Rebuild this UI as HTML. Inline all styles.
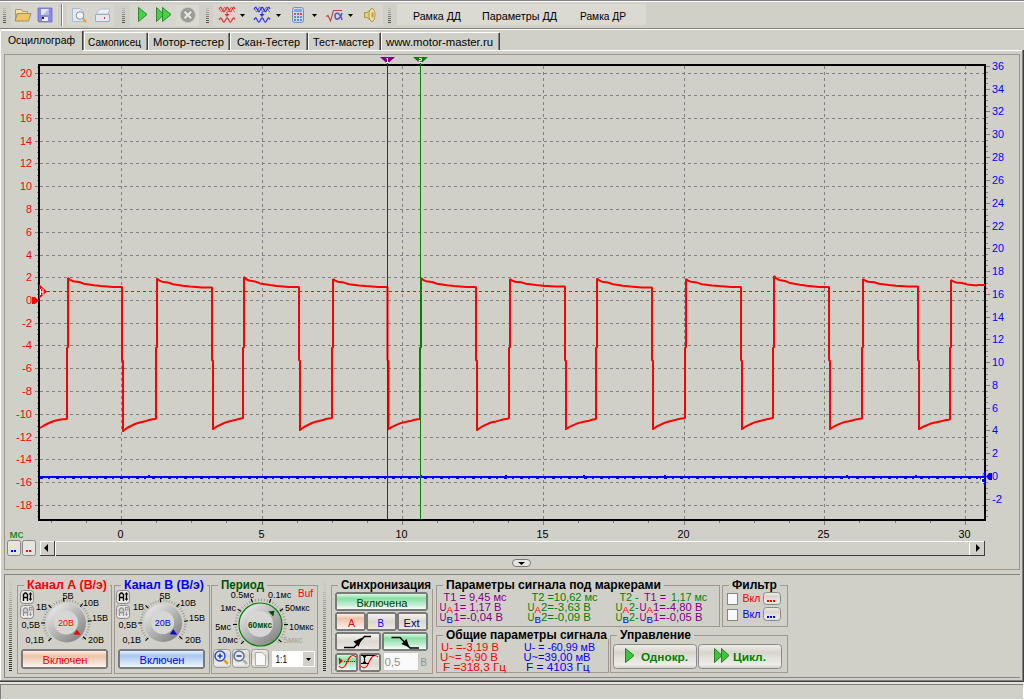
<!DOCTYPE html>
<html><head><meta charset="utf-8"><style>
html,body{margin:0;padding:0;background:#d0d0c8;width:1024px;height:700px;overflow:hidden}
svg{display:block;font-family:"Liberation Sans", sans-serif}
</style></head><body>
<svg width="1024" height="700" viewBox="0 0 1024 700">
<rect width="1024" height="700" fill="#d0d0c8"/>
<rect x="0" y="0" width="1024" height="1" fill="#808080" /><rect x="0" y="1" width="1024" height="1" fill="#ffffff" /><rect x="0" y="28" width="1024" height="1" fill="#808080" /><rect x="0" y="29" width="1024" height="1" fill="#ffffff" /><rect x="11" y="4" width="47" height="22" fill="#d6d6ce" /><rect x="67" y="4" width="47" height="22" fill="#d6d6ce" /><rect x="130" y="4" width="46" height="22" fill="#d6d6ce" /><rect x="176" y="5" width="23" height="21" fill="#dadad3" /><rect x="213" y="4" width="170" height="22" fill="#d6d6ce" /><rect x="397" y="4" width="249" height="21" fill="#dadad3" /><rect x="3" y="8" width="3" height="1" fill="#c0bcb4" /><rect x="3" y="10" width="3" height="1" fill="#b0aca0" /><rect x="3" y="12" width="3" height="1" fill="#a09c94" /><rect x="3" y="14" width="3" height="1" fill="#908c80" /><rect x="3" y="16" width="3" height="1" fill="#807c74" /><rect x="3" y="18" width="3" height="1" fill="#706c64" /><rect x="3" y="20" width="3" height="1" fill="#605c54" /><rect x="3" y="22" width="3" height="1" fill="#505050" /><rect x="122" y="8" width="3" height="1" fill="#c0bcb4" /><rect x="122" y="10" width="3" height="1" fill="#b0aca0" /><rect x="122" y="12" width="3" height="1" fill="#a09c94" /><rect x="122" y="14" width="3" height="1" fill="#908c80" /><rect x="122" y="16" width="3" height="1" fill="#807c74" /><rect x="122" y="18" width="3" height="1" fill="#706c64" /><rect x="122" y="20" width="3" height="1" fill="#605c54" /><rect x="122" y="22" width="3" height="1" fill="#505050" /><rect x="206" y="8" width="3" height="1" fill="#c0bcb4" /><rect x="206" y="10" width="3" height="1" fill="#b0aca0" /><rect x="206" y="12" width="3" height="1" fill="#a09c94" /><rect x="206" y="14" width="3" height="1" fill="#908c80" /><rect x="206" y="16" width="3" height="1" fill="#807c74" /><rect x="206" y="18" width="3" height="1" fill="#706c64" /><rect x="206" y="20" width="3" height="1" fill="#605c54" /><rect x="206" y="22" width="3" height="1" fill="#505050" /><rect x="388" y="8" width="3" height="1" fill="#c0bcb4" /><rect x="388" y="10" width="3" height="1" fill="#b0aca0" /><rect x="388" y="12" width="3" height="1" fill="#a09c94" /><rect x="388" y="14" width="3" height="1" fill="#908c80" /><rect x="388" y="16" width="3" height="1" fill="#807c74" /><rect x="388" y="18" width="3" height="1" fill="#706c64" /><rect x="388" y="20" width="3" height="1" fill="#605c54" /><rect x="388" y="22" width="3" height="1" fill="#505050" /><rect x="61" y="4" width="1" height="22" fill="#808080" /><rect x="62" y="4" width="1" height="22" fill="#ffffff" /><path d="M15.5,9.5 H21.5 L22.5,11.5 H27.5 V13.5 H17 L15.5,20.5 Z" fill="#f4e49a" stroke="#a89c70" stroke-width="1"/><path d="M17.5,13.5 H31 L28.5,21 H15 Z" fill="#eec764" stroke="#9c9068" stroke-width="1"/><path d="M38,8 H52 V22 H39 L38,21 Z" fill="#8a8ae0"/><path d="M38,8 H52 V22 H39 L38,21 Z" fill="none" stroke="#6a6ac8" stroke-width="0.8"/><rect x="41" y="9" width="8" height="6" fill="#e4e4ec" /><path d="M49,9 L49,15 L43,15 Z" fill="#b8b8e8"/><rect x="42" y="17" width="6" height="4" fill="#f0f0f4" /><rect x="42" y="17" width="2" height="2" fill="#202030" /><path d="M72.5,8.5 H80 L83.5,12 V21.5 H72.5 Z" fill="#e4e8ee" stroke="#a8bcd4" stroke-width="1"/><circle cx="80" cy="15.5" r="3.8" fill="#f4f4fa" stroke="#8890a8" stroke-width="1"/><path d="M83,19 L86,22" stroke="#e8a040" stroke-width="2.5"/><path d="M96,14 L100,9 H110 L108,14 Z" fill="#eef0f4" stroke="#a8b4c8" stroke-width="0.8"/><path d="M95.5,14.5 H109.5 V21.5 H95.5 Z" fill="#e4e8f0" stroke="#9cacc4" stroke-width="1"/><rect x="104" y="17" width="1" height="2" fill="#d03030" /><path d="M138.5,7.5 L147,14.5 L138.5,21.5 Z" fill="#48d048" stroke="#2c8a2c" stroke-width="1" stroke-linejoin="round"/><path d="M156.5,7.5 L164,14.5 L156.5,21.5 Z" fill="#48d048" stroke="#2c8a2c" stroke-width="1" stroke-linejoin="round"/><path d="M162.5,7.5 L171,14.5 L162.5,21.5 Z" fill="#48d048" stroke="#2c8a2c" stroke-width="1" stroke-linejoin="round"/><circle cx="187.8" cy="15" r="7.6" fill="#9a9a9a" stroke="#c8c8c8" stroke-width="0.8"/><path d="M184.5,11.7 L191.1,18.3 M191.1,11.7 L184.5,18.3" stroke="#e8e8e0" stroke-width="2"/><path d="M219.0,9.5 L219.5,8.5 L220.0,7.7 L220.5,7.3 L221.0,7.4 L221.5,8.0 L222.0,9.0 L222.5,10.0 L223.0,11.0 L223.5,11.6 L224.0,11.7 L224.5,11.3 L225.0,10.5 L225.5,9.5 L226.0,8.5 L226.5,7.7 L227.0,7.3 L227.5,7.4 L228.0,8.0 L228.5,9.0 L229.0,10.0 L229.5,11.0 L230.0,11.6 L230.5,11.7 L231.0,11.3 L231.5,10.5 L232.0,9.5 L232.5,8.5 L233.0,7.7 L233.5,7.3 L234.0,7.4 L234.5,8.0 L235.0,9.0" stroke="#f03030" stroke-width="1.2" fill="none"/><path d="M220.0,9.5 L220.5,10.5 L221.0,11.3 L221.5,11.7 L222.0,11.6 L222.5,11.0 L223.0,10.0 L223.5,9.0 L224.0,8.0 L224.5,7.4 L225.0,7.3 L225.5,7.7 L226.0,8.5 L226.5,9.5 L227.0,10.5 L227.5,11.3 L228.0,11.7 L228.5,11.6 L229.0,11.0 L229.5,10.0 L230.0,9.0 L230.5,8.0 L231.0,7.4 L231.5,7.3 L232.0,7.7 L232.5,8.5 L233.0,9.5 L233.5,10.5 L234.0,11.3 L234.5,11.7 L235.0,11.6" stroke="#f03030" stroke-width="1" fill="none" opacity="0.8"/><path d="M227,12 V15" stroke="#f03030" stroke-width="1.2"/><path d="M224.5,14 H229.5 L227,17 Z" fill="#f03030"/><path d="M219.0,20.0 L219.5,19.1 L220.0,18.4 L220.5,18.0 L221.0,18.1 L221.5,18.7 L222.0,19.5 L222.5,20.5 L223.0,21.3 L223.5,21.9 L224.0,22.0 L224.5,21.6 L225.0,20.9 L225.5,20.0 L226.0,19.1 L226.5,18.4 L227.0,18.0 L227.5,18.1 L228.0,18.7 L228.5,19.5 L229.0,20.5 L229.5,21.3 L230.0,21.9 L230.5,22.0 L231.0,21.6 L231.5,20.9 L232.0,20.0 L232.5,19.1 L233.0,18.4 L233.5,18.0 L234.0,18.1 L234.5,18.7 L235.0,19.5" stroke="#f03030" stroke-width="1.2" fill="none"/><path d="M254.0,9.5 L254.5,8.5 L255.0,7.7 L255.5,7.3 L256.0,7.4 L256.5,8.0 L257.0,9.0 L257.5,10.0 L258.0,11.0 L258.5,11.6 L259.0,11.7 L259.5,11.3 L260.0,10.5 L260.5,9.5 L261.0,8.5 L261.5,7.7 L262.0,7.3 L262.5,7.4 L263.0,8.0 L263.5,9.0 L264.0,10.0 L264.5,11.0 L265.0,11.6 L265.5,11.7 L266.0,11.3 L266.5,10.5 L267.0,9.5 L267.5,8.5 L268.0,7.7 L268.5,7.3 L269.0,7.4 L269.5,8.0 L270.0,9.0" stroke="#3030f0" stroke-width="1.2" fill="none"/><path d="M255.0,9.5 L255.5,10.5 L256.0,11.3 L256.5,11.7 L257.0,11.6 L257.5,11.0 L258.0,10.0 L258.5,9.0 L259.0,8.0 L259.5,7.4 L260.0,7.3 L260.5,7.7 L261.0,8.5 L261.5,9.5 L262.0,10.5 L262.5,11.3 L263.0,11.7 L263.5,11.6 L264.0,11.0 L264.5,10.0 L265.0,9.0 L265.5,8.0 L266.0,7.4 L266.5,7.3 L267.0,7.7 L267.5,8.5 L268.0,9.5 L268.5,10.5 L269.0,11.3 L269.5,11.7 L270.0,11.6" stroke="#3030f0" stroke-width="1" fill="none" opacity="0.8"/><path d="M262,12 V15" stroke="#3030f0" stroke-width="1.2"/><path d="M259.5,14 H264.5 L262,17 Z" fill="#3030f0"/><path d="M254.0,20.0 L254.5,19.1 L255.0,18.4 L255.5,18.0 L256.0,18.1 L256.5,18.7 L257.0,19.5 L257.5,20.5 L258.0,21.3 L258.5,21.9 L259.0,22.0 L259.5,21.6 L260.0,20.9 L260.5,20.0 L261.0,19.1 L261.5,18.4 L262.0,18.0 L262.5,18.1 L263.0,18.7 L263.5,19.5 L264.0,20.5 L264.5,21.3 L265.0,21.9 L265.5,22.0 L266.0,21.6 L266.5,20.9 L267.0,20.0 L267.5,19.1 L268.0,18.4 L268.5,18.0 L269.0,18.1 L269.5,18.7 L270.0,19.5" stroke="#3030f0" stroke-width="1.2" fill="none"/><path d="M240,14 H245 L242.5,17 Z" fill="#000"/><path d="M276,14 H281 L278.5,17 Z" fill="#000"/><path d="M312,14 H317 L314.5,17 Z" fill="#000"/><path d="M348,14 H353 L350.5,17 Z" fill="#000"/><rect x="292.5" y="7.5" width="11" height="15" rx="2" fill="#c8d8ee" stroke="#7890b8"/><rect x="294" y="9" width="8" height="3" fill="#80a8e0" /><rect x="294" y="13" width="2" height="2" fill="#e05050" /><rect x="294" y="16" width="2" height="2" fill="#6888c8" /><rect x="294" y="19" width="2" height="2" fill="#6888c8" /><rect x="297" y="13" width="2" height="2" fill="#e05050" /><rect x="297" y="16" width="2" height="2" fill="#6888c8" /><rect x="297" y="19" width="2" height="2" fill="#6888c8" /><rect x="300" y="13" width="2" height="2" fill="#e05050" /><rect x="300" y="16" width="2" height="2" fill="#6888c8" /><rect x="300" y="19" width="2" height="2" fill="#6888c8" /><path d="M326,16.5 L328,15.5 L330.5,21 L333.5,10.5 H342" stroke="#b04838" stroke-width="1.1" fill="none"/><path d="M342,13 C340,20 335,21 335,16 C335,11.5 340,12 342,20" stroke="#6050c8" stroke-width="1.5" fill="none"/><path d="M364.5,12.5 H367 L372,8.5 V21.5 L367,17.5 H364.5 Z" fill="#e8cc70" stroke="#a08838" stroke-width="0.8"/><ellipse cx="372" cy="15" rx="3" ry="6.5" fill="#f0e0a0" stroke="#a08838" stroke-width="0.8"/><ellipse cx="372.5" cy="15" rx="1.2" ry="3" fill="#c0a050"/><text x="413" y="20" font-size="11" fill="#000" text-anchor="start" font-weight="normal" textLength="48" lengthAdjust="spacingAndGlyphs" >Рамка ДД</text><text x="482" y="20" font-size="11" fill="#000" text-anchor="start" font-weight="normal" textLength="75" lengthAdjust="spacingAndGlyphs" >Параметры ДД</text><text x="580" y="20" font-size="11" fill="#000" text-anchor="start" font-weight="normal" textLength="46" lengthAdjust="spacingAndGlyphs" >Рамка ДР</text><rect x="0" y="50" width="1022" height="1" fill="#ffffff" /><rect x="0" y="30" width="1" height="650" fill="#ffffff" /><rect x="1022" y="50" width="1" height="631" fill="#808080" /><rect x="1023" y="50" width="1" height="632" fill="#404040" /><rect x="0" y="30" width="83" height="21" fill="#d0d0c8" /><rect x="1" y="30" width="82" height="1" fill="#ffffff" /><rect x="0" y="31" width="1" height="20" fill="#ffffff" /><rect x="83" y="31" width="1" height="19" fill="#808080" /><rect x="82" y="31" width="1" height="19" fill="#404040" /><rect x="84" y="32" width="63" height="1" fill="#ffffff" /><rect x="84" y="32" width="1" height="18" fill="#ffffff" /><rect x="146" y="33" width="1" height="17" fill="#808080" /><rect x="147" y="33" width="1" height="17" fill="#404040" /><rect x="148" y="32" width="81" height="1" fill="#ffffff" /><rect x="148" y="32" width="1" height="18" fill="#ffffff" /><rect x="228" y="33" width="1" height="17" fill="#808080" /><rect x="229" y="33" width="1" height="17" fill="#404040" /><rect x="230" y="32" width="77" height="1" fill="#ffffff" /><rect x="230" y="32" width="1" height="18" fill="#ffffff" /><rect x="306" y="33" width="1" height="17" fill="#808080" /><rect x="307" y="33" width="1" height="17" fill="#404040" /><rect x="308" y="32" width="72" height="1" fill="#ffffff" /><rect x="308" y="32" width="1" height="18" fill="#ffffff" /><rect x="379" y="33" width="1" height="17" fill="#808080" /><rect x="380" y="33" width="1" height="17" fill="#404040" /><rect x="381" y="32" width="118" height="1" fill="#ffffff" /><rect x="381" y="32" width="1" height="18" fill="#ffffff" /><rect x="498" y="33" width="1" height="17" fill="#808080" /><rect x="499" y="33" width="1" height="17" fill="#404040" /><text x="8" y="44" font-size="11" fill="#000" text-anchor="start" font-weight="normal" textLength="67" lengthAdjust="spacingAndGlyphs" >Осциллограф</text><text x="88" y="46" font-size="11" fill="#000" text-anchor="start" font-weight="normal" textLength="53" lengthAdjust="spacingAndGlyphs" >Самописец</text><text x="153" y="46" font-size="11" fill="#000" text-anchor="start" font-weight="normal" textLength="71" lengthAdjust="spacingAndGlyphs" >Мотор-тестер</text><text x="237" y="46" font-size="11" fill="#000" text-anchor="start" font-weight="normal" textLength="63" lengthAdjust="spacingAndGlyphs" >Скан-Тестер</text><text x="313" y="46" font-size="11" fill="#000" text-anchor="start" font-weight="normal" textLength="61" lengthAdjust="spacingAndGlyphs" >Тест-мастер</text><text x="386" y="46" font-size="11" fill="#000" text-anchor="start" font-weight="normal" textLength="107" lengthAdjust="spacingAndGlyphs" >www.motor-master.ru</text><rect x="4" y="54" width="1016" height="1" fill="#9d978f" /><rect x="4" y="54" width="1" height="516" fill="#9d978f" /><rect x="1019" y="54" width="1" height="516" fill="#9d978f" /><rect x="4" y="569" width="1016" height="1" fill="#9d978f" /><line x1="40" y1="73.5" x2="984" y2="73.5" stroke="#808080" stroke-width="1" stroke-dasharray="3 3" stroke-dashoffset="0"/><line x1="40" y1="95.5" x2="984" y2="95.5" stroke="#808080" stroke-width="1" stroke-dasharray="3 3" stroke-dashoffset="0"/><line x1="40" y1="118.5" x2="984" y2="118.5" stroke="#808080" stroke-width="1" stroke-dasharray="3 3" stroke-dashoffset="0"/><line x1="40" y1="141.5" x2="984" y2="141.5" stroke="#808080" stroke-width="1" stroke-dasharray="3 3" stroke-dashoffset="0"/><line x1="40" y1="163.5" x2="984" y2="163.5" stroke="#808080" stroke-width="1" stroke-dasharray="3 3" stroke-dashoffset="0"/><line x1="40" y1="186.5" x2="984" y2="186.5" stroke="#808080" stroke-width="1" stroke-dasharray="3 3" stroke-dashoffset="0"/><line x1="40" y1="209.5" x2="984" y2="209.5" stroke="#808080" stroke-width="1" stroke-dasharray="3 3" stroke-dashoffset="0"/><line x1="40" y1="232.5" x2="984" y2="232.5" stroke="#808080" stroke-width="1" stroke-dasharray="3 3" stroke-dashoffset="0"/><line x1="40" y1="255.5" x2="984" y2="255.5" stroke="#808080" stroke-width="1" stroke-dasharray="3 3" stroke-dashoffset="0"/><line x1="40" y1="277.5" x2="984" y2="277.5" stroke="#808080" stroke-width="1" stroke-dasharray="3 3" stroke-dashoffset="0"/><line x1="40" y1="300.5" x2="984" y2="300.5" stroke="#808080" stroke-width="1" stroke-dasharray="3 3" stroke-dashoffset="0"/><line x1="40" y1="323.5" x2="984" y2="323.5" stroke="#808080" stroke-width="1" stroke-dasharray="3 3" stroke-dashoffset="0"/><line x1="40" y1="345.5" x2="984" y2="345.5" stroke="#808080" stroke-width="1" stroke-dasharray="3 3" stroke-dashoffset="0"/><line x1="40" y1="368.5" x2="984" y2="368.5" stroke="#808080" stroke-width="1" stroke-dasharray="3 3" stroke-dashoffset="0"/><line x1="40" y1="391.5" x2="984" y2="391.5" stroke="#808080" stroke-width="1" stroke-dasharray="3 3" stroke-dashoffset="0"/><line x1="40" y1="414.5" x2="984" y2="414.5" stroke="#808080" stroke-width="1" stroke-dasharray="3 3" stroke-dashoffset="0"/><line x1="40" y1="437.5" x2="984" y2="437.5" stroke="#808080" stroke-width="1" stroke-dasharray="3 3" stroke-dashoffset="0"/><line x1="40" y1="459.5" x2="984" y2="459.5" stroke="#808080" stroke-width="1" stroke-dasharray="3 3" stroke-dashoffset="0"/><line x1="40" y1="482.5" x2="984" y2="482.5" stroke="#808080" stroke-width="1" stroke-dasharray="3 3" stroke-dashoffset="0"/><line x1="40" y1="505.5" x2="984" y2="505.5" stroke="#808080" stroke-width="1" stroke-dasharray="3 3" stroke-dashoffset="0"/><line x1="121.5" y1="66" x2="121.5" y2="519" stroke="#808080" stroke-width="1" stroke-dasharray="3 3"/><line x1="262.5" y1="66" x2="262.5" y2="519" stroke="#808080" stroke-width="1" stroke-dasharray="3 3"/><line x1="402.5" y1="66" x2="402.5" y2="519" stroke="#808080" stroke-width="1" stroke-dasharray="3 3"/><line x1="543.5" y1="66" x2="543.5" y2="519" stroke="#808080" stroke-width="1" stroke-dasharray="3 3"/><line x1="684.5" y1="66" x2="684.5" y2="519" stroke="#808080" stroke-width="1" stroke-dasharray="3 3"/><line x1="824.5" y1="66" x2="824.5" y2="519" stroke="#808080" stroke-width="1" stroke-dasharray="3 3"/><line x1="965.5" y1="66" x2="965.5" y2="519" stroke="#808080" stroke-width="1" stroke-dasharray="3 3"/><rect x="35" y="73" width="3" height="1" fill="#808080" /><rect x="35" y="95" width="3" height="1" fill="#808080" /><rect x="35" y="118" width="3" height="1" fill="#808080" /><rect x="35" y="141" width="3" height="1" fill="#808080" /><rect x="35" y="163" width="3" height="1" fill="#808080" /><rect x="35" y="186" width="3" height="1" fill="#808080" /><rect x="35" y="209" width="3" height="1" fill="#808080" /><rect x="35" y="232" width="3" height="1" fill="#808080" /><rect x="35" y="255" width="3" height="1" fill="#808080" /><rect x="35" y="277" width="3" height="1" fill="#808080" /><rect x="35" y="300" width="3" height="1" fill="#808080" /><rect x="35" y="323" width="3" height="1" fill="#808080" /><rect x="35" y="345" width="3" height="1" fill="#808080" /><rect x="35" y="368" width="3" height="1" fill="#808080" /><rect x="35" y="391" width="3" height="1" fill="#808080" /><rect x="35" y="414" width="3" height="1" fill="#808080" /><rect x="35" y="437" width="3" height="1" fill="#808080" /><rect x="35" y="459" width="3" height="1" fill="#808080" /><rect x="35" y="482" width="3" height="1" fill="#808080" /><rect x="35" y="505" width="3" height="1" fill="#808080" /><rect x="37" y="67" width="1" height="1" fill="#808080" /><rect x="37" y="79" width="1" height="1" fill="#808080" /><rect x="37" y="84" width="1" height="1" fill="#808080" /><rect x="37" y="90" width="1" height="1" fill="#808080" /><rect x="37" y="101" width="1" height="1" fill="#808080" /><rect x="37" y="107" width="1" height="1" fill="#808080" /><rect x="37" y="112" width="1" height="1" fill="#808080" /><rect x="37" y="124" width="1" height="1" fill="#808080" /><rect x="37" y="130" width="1" height="1" fill="#808080" /><rect x="37" y="135" width="1" height="1" fill="#808080" /><rect x="37" y="147" width="1" height="1" fill="#808080" /><rect x="37" y="152" width="1" height="1" fill="#808080" /><rect x="37" y="158" width="1" height="1" fill="#808080" /><rect x="37" y="169" width="1" height="1" fill="#808080" /><rect x="37" y="175" width="1" height="1" fill="#808080" /><rect x="37" y="180" width="1" height="1" fill="#808080" /><rect x="37" y="192" width="1" height="1" fill="#808080" /><rect x="37" y="198" width="1" height="1" fill="#808080" /><rect x="37" y="203" width="1" height="1" fill="#808080" /><rect x="37" y="215" width="1" height="1" fill="#808080" /><rect x="37" y="221" width="1" height="1" fill="#808080" /><rect x="37" y="226" width="1" height="1" fill="#808080" /><rect x="37" y="238" width="1" height="1" fill="#808080" /><rect x="37" y="244" width="1" height="1" fill="#808080" /><rect x="37" y="249" width="1" height="1" fill="#808080" /><rect x="37" y="261" width="1" height="1" fill="#808080" /><rect x="37" y="266" width="1" height="1" fill="#808080" /><rect x="37" y="272" width="1" height="1" fill="#808080" /><rect x="37" y="283" width="1" height="1" fill="#808080" /><rect x="37" y="289" width="1" height="1" fill="#808080" /><rect x="37" y="294" width="1" height="1" fill="#808080" /><rect x="37" y="306" width="1" height="1" fill="#808080" /><rect x="37" y="312" width="1" height="1" fill="#808080" /><rect x="37" y="317" width="1" height="1" fill="#808080" /><rect x="37" y="329" width="1" height="1" fill="#808080" /><rect x="37" y="334" width="1" height="1" fill="#808080" /><rect x="37" y="340" width="1" height="1" fill="#808080" /><rect x="37" y="351" width="1" height="1" fill="#808080" /><rect x="37" y="357" width="1" height="1" fill="#808080" /><rect x="37" y="362" width="1" height="1" fill="#808080" /><rect x="37" y="374" width="1" height="1" fill="#808080" /><rect x="37" y="380" width="1" height="1" fill="#808080" /><rect x="37" y="385" width="1" height="1" fill="#808080" /><rect x="37" y="397" width="1" height="1" fill="#808080" /><rect x="37" y="403" width="1" height="1" fill="#808080" /><rect x="37" y="408" width="1" height="1" fill="#808080" /><rect x="37" y="420" width="1" height="1" fill="#808080" /><rect x="37" y="426" width="1" height="1" fill="#808080" /><rect x="37" y="431" width="1" height="1" fill="#808080" /><rect x="37" y="443" width="1" height="1" fill="#808080" /><rect x="37" y="448" width="1" height="1" fill="#808080" /><rect x="37" y="454" width="1" height="1" fill="#808080" /><rect x="37" y="465" width="1" height="1" fill="#808080" /><rect x="37" y="471" width="1" height="1" fill="#808080" /><rect x="37" y="476" width="1" height="1" fill="#808080" /><rect x="37" y="488" width="1" height="1" fill="#808080" /><rect x="37" y="494" width="1" height="1" fill="#808080" /><rect x="37" y="499" width="1" height="1" fill="#808080" /><rect x="37" y="511" width="1" height="1" fill="#808080" /><rect x="37" y="516" width="1" height="1" fill="#808080" /><rect x="986" y="66" width="4" height="1" fill="#808080" /><rect x="986" y="89" width="4" height="1" fill="#808080" /><rect x="986" y="111" width="4" height="1" fill="#808080" /><rect x="986" y="134" width="4" height="1" fill="#808080" /><rect x="986" y="157" width="4" height="1" fill="#808080" /><rect x="986" y="180" width="4" height="1" fill="#808080" /><rect x="986" y="203" width="4" height="1" fill="#808080" /><rect x="986" y="226" width="4" height="1" fill="#808080" /><rect x="986" y="248" width="4" height="1" fill="#808080" /><rect x="986" y="271" width="4" height="1" fill="#808080" /><rect x="986" y="294" width="4" height="1" fill="#808080" /><rect x="986" y="317" width="4" height="1" fill="#808080" /><rect x="986" y="339" width="4" height="1" fill="#808080" /><rect x="986" y="362" width="4" height="1" fill="#808080" /><rect x="986" y="385" width="4" height="1" fill="#808080" /><rect x="986" y="408" width="4" height="1" fill="#808080" /><rect x="986" y="430" width="4" height="1" fill="#808080" /><rect x="986" y="453" width="4" height="1" fill="#808080" /><rect x="986" y="476" width="4" height="1" fill="#808080" /><rect x="986" y="499" width="4" height="1" fill="#808080" /><rect x="986" y="72" width="2" height="1" fill="#808080" /><rect x="986" y="78" width="2" height="1" fill="#808080" /><rect x="986" y="83" width="2" height="1" fill="#808080" /><rect x="986" y="95" width="2" height="1" fill="#808080" /><rect x="986" y="100" width="2" height="1" fill="#808080" /><rect x="986" y="106" width="2" height="1" fill="#808080" /><rect x="986" y="117" width="2" height="1" fill="#808080" /><rect x="986" y="123" width="2" height="1" fill="#808080" /><rect x="986" y="128" width="2" height="1" fill="#808080" /><rect x="986" y="140" width="2" height="1" fill="#808080" /><rect x="986" y="146" width="2" height="1" fill="#808080" /><rect x="986" y="151" width="2" height="1" fill="#808080" /><rect x="986" y="163" width="2" height="1" fill="#808080" /><rect x="986" y="169" width="2" height="1" fill="#808080" /><rect x="986" y="174" width="2" height="1" fill="#808080" /><rect x="986" y="186" width="2" height="1" fill="#808080" /><rect x="986" y="192" width="2" height="1" fill="#808080" /><rect x="986" y="197" width="2" height="1" fill="#808080" /><rect x="986" y="209" width="2" height="1" fill="#808080" /><rect x="986" y="215" width="2" height="1" fill="#808080" /><rect x="986" y="220" width="2" height="1" fill="#808080" /><rect x="986" y="232" width="2" height="1" fill="#808080" /><rect x="986" y="237" width="2" height="1" fill="#808080" /><rect x="986" y="243" width="2" height="1" fill="#808080" /><rect x="986" y="254" width="2" height="1" fill="#808080" /><rect x="986" y="260" width="2" height="1" fill="#808080" /><rect x="986" y="265" width="2" height="1" fill="#808080" /><rect x="986" y="277" width="2" height="1" fill="#808080" /><rect x="986" y="283" width="2" height="1" fill="#808080" /><rect x="986" y="288" width="2" height="1" fill="#808080" /><rect x="986" y="300" width="2" height="1" fill="#808080" /><rect x="986" y="306" width="2" height="1" fill="#808080" /><rect x="986" y="311" width="2" height="1" fill="#808080" /><rect x="986" y="323" width="2" height="1" fill="#808080" /><rect x="986" y="328" width="2" height="1" fill="#808080" /><rect x="986" y="334" width="2" height="1" fill="#808080" /><rect x="986" y="345" width="2" height="1" fill="#808080" /><rect x="986" y="351" width="2" height="1" fill="#808080" /><rect x="986" y="356" width="2" height="1" fill="#808080" /><rect x="986" y="368" width="2" height="1" fill="#808080" /><rect x="986" y="374" width="2" height="1" fill="#808080" /><rect x="986" y="379" width="2" height="1" fill="#808080" /><rect x="986" y="391" width="2" height="1" fill="#808080" /><rect x="986" y="397" width="2" height="1" fill="#808080" /><rect x="986" y="402" width="2" height="1" fill="#808080" /><rect x="986" y="414" width="2" height="1" fill="#808080" /><rect x="986" y="419" width="2" height="1" fill="#808080" /><rect x="986" y="425" width="2" height="1" fill="#808080" /><rect x="986" y="436" width="2" height="1" fill="#808080" /><rect x="986" y="442" width="2" height="1" fill="#808080" /><rect x="986" y="447" width="2" height="1" fill="#808080" /><rect x="986" y="459" width="2" height="1" fill="#808080" /><rect x="986" y="465" width="2" height="1" fill="#808080" /><rect x="986" y="470" width="2" height="1" fill="#808080" /><rect x="986" y="482" width="2" height="1" fill="#808080" /><rect x="986" y="488" width="2" height="1" fill="#808080" /><rect x="986" y="493" width="2" height="1" fill="#808080" /><rect x="986" y="505" width="2" height="1" fill="#808080" /><rect x="986" y="510" width="2" height="1" fill="#808080" /><rect x="986" y="516" width="2" height="1" fill="#808080" /><rect x="51" y="521" width="1" height="2" fill="#808080" /><rect x="86" y="521" width="1" height="2" fill="#808080" /><rect x="121" y="521" width="1" height="4" fill="#808080" /><rect x="156" y="521" width="1" height="2" fill="#808080" /><rect x="191" y="521" width="1" height="2" fill="#808080" /><rect x="226" y="521" width="1" height="2" fill="#808080" /><rect x="262" y="521" width="1" height="4" fill="#808080" /><rect x="297" y="521" width="1" height="2" fill="#808080" /><rect x="332" y="521" width="1" height="2" fill="#808080" /><rect x="367" y="521" width="1" height="2" fill="#808080" /><rect x="402" y="521" width="1" height="4" fill="#808080" /><rect x="437" y="521" width="1" height="2" fill="#808080" /><rect x="473" y="521" width="1" height="2" fill="#808080" /><rect x="508" y="521" width="1" height="2" fill="#808080" /><rect x="543" y="521" width="1" height="4" fill="#808080" /><rect x="578" y="521" width="1" height="2" fill="#808080" /><rect x="613" y="521" width="1" height="2" fill="#808080" /><rect x="648" y="521" width="1" height="2" fill="#808080" /><rect x="684" y="521" width="1" height="4" fill="#808080" /><rect x="719" y="521" width="1" height="2" fill="#808080" /><rect x="754" y="521" width="1" height="2" fill="#808080" /><rect x="789" y="521" width="1" height="2" fill="#808080" /><rect x="824" y="521" width="1" height="4" fill="#808080" /><rect x="859" y="521" width="1" height="2" fill="#808080" /><rect x="895" y="521" width="1" height="2" fill="#808080" /><rect x="930" y="521" width="1" height="2" fill="#808080" /><rect x="965" y="521" width="1" height="4" fill="#808080" /><rect x="38" y="64" width="948" height="2" fill="#000" /><rect x="38" y="519" width="948" height="2" fill="#000" /><rect x="38" y="64" width="2" height="457" fill="#000" /><rect x="984" y="64" width="2" height="457" fill="#000" /><text x="20" y="77" font-size="11" fill="#ff0000" text-anchor="start" font-weight="normal" textLength="12" lengthAdjust="spacingAndGlyphs" >20</text><text x="20" y="99" font-size="11" fill="#ff0000" text-anchor="start" font-weight="normal" textLength="12" lengthAdjust="spacingAndGlyphs" >18</text><text x="20" y="122" font-size="11" fill="#ff0000" text-anchor="start" font-weight="normal" textLength="12" lengthAdjust="spacingAndGlyphs" >16</text><text x="20" y="145" font-size="11" fill="#ff0000" text-anchor="start" font-weight="normal" textLength="12" lengthAdjust="spacingAndGlyphs" >14</text><text x="20" y="167" font-size="11" fill="#ff0000" text-anchor="start" font-weight="normal" textLength="12" lengthAdjust="spacingAndGlyphs" >12</text><text x="20" y="190" font-size="11" fill="#ff0000" text-anchor="start" font-weight="normal" textLength="12" lengthAdjust="spacingAndGlyphs" >10</text><text x="26" y="213" font-size="11" fill="#ff0000" text-anchor="start" font-weight="normal" textLength="6" lengthAdjust="spacingAndGlyphs" >8</text><text x="26" y="236" font-size="11" fill="#ff0000" text-anchor="start" font-weight="normal" textLength="6" lengthAdjust="spacingAndGlyphs" >6</text><text x="26" y="259" font-size="11" fill="#ff0000" text-anchor="start" font-weight="normal" textLength="6" lengthAdjust="spacingAndGlyphs" >4</text><text x="26" y="281" font-size="11" fill="#ff0000" text-anchor="start" font-weight="normal" textLength="6" lengthAdjust="spacingAndGlyphs" >2</text><text x="26" y="304" font-size="11" fill="#ff0000" text-anchor="start" font-weight="normal" textLength="6" lengthAdjust="spacingAndGlyphs" >0</text><text x="22" y="327" font-size="11" fill="#ff0000" text-anchor="start" font-weight="normal" textLength="10" lengthAdjust="spacingAndGlyphs" >-2</text><text x="22" y="349" font-size="11" fill="#ff0000" text-anchor="start" font-weight="normal" textLength="10" lengthAdjust="spacingAndGlyphs" >-4</text><text x="22" y="372" font-size="11" fill="#ff0000" text-anchor="start" font-weight="normal" textLength="10" lengthAdjust="spacingAndGlyphs" >-6</text><text x="22" y="395" font-size="11" fill="#ff0000" text-anchor="start" font-weight="normal" textLength="10" lengthAdjust="spacingAndGlyphs" >-8</text><text x="16" y="418" font-size="11" fill="#ff0000" text-anchor="start" font-weight="normal" textLength="16" lengthAdjust="spacingAndGlyphs" >-10</text><text x="16" y="441" font-size="11" fill="#ff0000" text-anchor="start" font-weight="normal" textLength="16" lengthAdjust="spacingAndGlyphs" >-12</text><text x="16" y="463" font-size="11" fill="#ff0000" text-anchor="start" font-weight="normal" textLength="16" lengthAdjust="spacingAndGlyphs" >-14</text><text x="16" y="486" font-size="11" fill="#ff0000" text-anchor="start" font-weight="normal" textLength="16" lengthAdjust="spacingAndGlyphs" >-16</text><text x="16" y="509" font-size="11" fill="#ff0000" text-anchor="start" font-weight="normal" textLength="16" lengthAdjust="spacingAndGlyphs" >-18</text><text x="992" y="70" font-size="11" fill="#0000ff" text-anchor="start" font-weight="normal" textLength="12" lengthAdjust="spacingAndGlyphs" >36</text><text x="992" y="93" font-size="11" fill="#0000ff" text-anchor="start" font-weight="normal" textLength="12" lengthAdjust="spacingAndGlyphs" >34</text><text x="992" y="115" font-size="11" fill="#0000ff" text-anchor="start" font-weight="normal" textLength="12" lengthAdjust="spacingAndGlyphs" >32</text><text x="992" y="138" font-size="11" fill="#0000ff" text-anchor="start" font-weight="normal" textLength="12" lengthAdjust="spacingAndGlyphs" >30</text><text x="992" y="161" font-size="11" fill="#0000ff" text-anchor="start" font-weight="normal" textLength="12" lengthAdjust="spacingAndGlyphs" >28</text><text x="992" y="184" font-size="11" fill="#0000ff" text-anchor="start" font-weight="normal" textLength="12" lengthAdjust="spacingAndGlyphs" >26</text><text x="992" y="207" font-size="11" fill="#0000ff" text-anchor="start" font-weight="normal" textLength="12" lengthAdjust="spacingAndGlyphs" >24</text><text x="992" y="230" font-size="11" fill="#0000ff" text-anchor="start" font-weight="normal" textLength="12" lengthAdjust="spacingAndGlyphs" >22</text><text x="992" y="252" font-size="11" fill="#0000ff" text-anchor="start" font-weight="normal" textLength="12" lengthAdjust="spacingAndGlyphs" >20</text><text x="992" y="275" font-size="11" fill="#0000ff" text-anchor="start" font-weight="normal" textLength="12" lengthAdjust="spacingAndGlyphs" >18</text><text x="992" y="298" font-size="11" fill="#0000ff" text-anchor="start" font-weight="normal" textLength="12" lengthAdjust="spacingAndGlyphs" >16</text><text x="992" y="321" font-size="11" fill="#0000ff" text-anchor="start" font-weight="normal" textLength="12" lengthAdjust="spacingAndGlyphs" >14</text><text x="992" y="343" font-size="11" fill="#0000ff" text-anchor="start" font-weight="normal" textLength="12" lengthAdjust="spacingAndGlyphs" >12</text><text x="992" y="366" font-size="11" fill="#0000ff" text-anchor="start" font-weight="normal" textLength="12" lengthAdjust="spacingAndGlyphs" >10</text><text x="992" y="389" font-size="11" fill="#0000ff" text-anchor="start" font-weight="normal" textLength="6" lengthAdjust="spacingAndGlyphs" >8</text><text x="992" y="412" font-size="11" fill="#0000ff" text-anchor="start" font-weight="normal" textLength="6" lengthAdjust="spacingAndGlyphs" >6</text><text x="992" y="434" font-size="11" fill="#0000ff" text-anchor="start" font-weight="normal" textLength="6" lengthAdjust="spacingAndGlyphs" >4</text><text x="992" y="457" font-size="11" fill="#0000ff" text-anchor="start" font-weight="normal" textLength="6" lengthAdjust="spacingAndGlyphs" >2</text><text x="992" y="480" font-size="11" fill="#0000ff" text-anchor="start" font-weight="normal" textLength="6" lengthAdjust="spacingAndGlyphs" >0</text><text x="992" y="503" font-size="11" fill="#0000ff" text-anchor="start" font-weight="normal" textLength="10" lengthAdjust="spacingAndGlyphs" >-2</text><text x="117.5" y="538" font-size="11" fill="#000" text-anchor="start" font-weight="normal" textLength="6" lengthAdjust="spacingAndGlyphs" >0</text><text x="258.5" y="538" font-size="11" fill="#000" text-anchor="start" font-weight="normal" textLength="6" lengthAdjust="spacingAndGlyphs" >5</text><text x="395.5" y="538" font-size="11" fill="#000" text-anchor="start" font-weight="normal" textLength="12" lengthAdjust="spacingAndGlyphs" >10</text><text x="536.5" y="538" font-size="11" fill="#000" text-anchor="start" font-weight="normal" textLength="12" lengthAdjust="spacingAndGlyphs" >15</text><text x="677.5" y="538" font-size="11" fill="#000" text-anchor="start" font-weight="normal" textLength="12" lengthAdjust="spacingAndGlyphs" >20</text><text x="817.5" y="538" font-size="11" fill="#000" text-anchor="start" font-weight="normal" textLength="12" lengthAdjust="spacingAndGlyphs" >25</text><text x="958.5" y="538" font-size="11" fill="#000" text-anchor="start" font-weight="normal" textLength="12" lengthAdjust="spacingAndGlyphs" >30</text><text x="9.5" y="538" font-size="11" fill="#008000" text-anchor="start" font-weight="normal" textLength="14" lengthAdjust="spacingAndGlyphs" >мс</text><line x1="47" y1="291.5" x2="984" y2="291.5" stroke="#ff0000" stroke-width="1" stroke-dasharray="3 3"/><path d="M39,284 L47,291.5 L39,299 Z" fill="#ff0000"/><path d="M40.5,295 V289.5 L41.5,288.5 H42 L43,289.5 V295 M40.5,292 H43" stroke="#ffffff" stroke-width="1" fill="none"/><path d="M32,297 H35 L39,300.5 L35,304 H32 Z" fill="#ff0000"/><path d="M40.0,428.0 L44.0,425.5 L49.0,423.0 L54.0,421.0 L58.0,420.0 L63.0,419.3 L67.0,419.0 L67.0,348.0 L68.0,347.0 L68.0,278.0 L70.0,279.8 L73.0,281.2 L79.0,282.0 L84.0,283.8 L94.0,285.2 L101.0,286.0 L113.0,287.0 L122.0,287.0 L122.0,360.0 L123.0,361.0 L123.0,432.0 L123.0,431.0 L127.0,428.0 L131.0,426.0 L135.0,424.0 L138.0,423.0 L142.0,422.0 L146.0,421.0 L149.0,420.0 L154.0,419.0 L156.0,419.0 L156.0,348.0 L157.0,347.0 L157.0,278.5 L159.0,280.3 L162.0,281.7 L168.0,282.5 L173.0,284.3 L183.0,285.7 L190.0,286.5 L202.0,287.5 L212.0,287.5 L212.0,360.0 L213.0,361.0 L213.0,430.0 L213.0,429.1 L217.0,426.3 L221.0,424.5 L225.0,422.6 L228.0,421.7 L232.0,420.8 L236.0,419.8 L239.0,418.9 L243.0,418.0 L243.0,348.0 L244.0,347.0 L244.0,277.0 L246.0,279.0 L249.0,280.6 L255.0,281.4 L260.0,283.4 L270.0,285.0 L277.0,285.9 L289.0,287.0 L299.0,287.0 L299.0,360.0 L300.0,361.0 L300.0,431.0 L300.0,430.0 L304.0,427.0 L308.0,425.0 L312.0,423.0 L315.0,422.0 L319.0,421.0 L323.0,420.0 L326.0,419.0 L332.0,418.0 L332.0,348.0 L333.0,347.0 L333.0,279.0 L335.0,280.6 L338.0,281.8 L344.0,282.6 L349.0,284.2 L359.0,285.4 L366.0,286.1 L378.0,287.0 L387.5,287.0 L387.5,360.0 L388.5,361.0 L388.5,430.0 L388.5,429.2 L392.5,426.6 L396.5,424.9 L400.5,423.2 L403.5,422.4 L407.5,421.5 L411.5,420.7 L414.5,419.8 L420.0,419.0 L420.0,348.0 L421.0,347.0 L421.0,278.0 L423.0,279.8 L426.0,281.2 L432.0,282.0 L437.0,283.8 L447.0,285.2 L454.0,286.0 L466.0,287.0 L476.0,287.0 L476.0,360.0 L477.0,361.0 L477.0,431.0 L477.0,430.0 L481.0,427.2 L485.0,425.2 L489.0,423.3 L492.0,422.3 L496.0,421.4 L500.0,420.4 L503.0,419.5 L509.0,418.5 L509.0,348.0 L510.0,347.0 L510.0,279.0 L512.0,280.5 L515.0,281.7 L521.0,282.3 L526.0,283.8 L536.0,285.0 L543.0,285.7 L555.0,286.5 L565.0,286.5 L565.0,360.0 L566.0,361.0 L566.0,430.0 L566.0,429.2 L570.0,426.6 L574.0,424.9 L578.0,423.2 L581.0,422.4 L585.0,421.5 L589.0,420.7 L592.0,419.8 L596.0,419.0 L596.0,348.0 L597.0,347.0 L597.0,278.5 L599.0,280.3 L602.0,281.7 L608.0,282.5 L613.0,284.3 L623.0,285.7 L630.0,286.5 L642.0,287.5 L652.0,287.5 L652.0,360.0 L653.0,361.0 L653.0,430.0 L653.0,429.1 L657.0,426.3 L661.0,424.5 L665.0,422.6 L668.0,421.7 L672.0,420.8 L676.0,419.8 L679.0,418.9 L685.0,418.0 L685.0,348.0 L686.0,347.0 L686.0,279.0 L688.0,280.6 L691.0,281.8 L697.0,282.6 L702.0,284.2 L712.0,285.4 L719.0,286.1 L731.0,287.0 L741.0,287.0 L741.0,360.0 L742.0,361.0 L742.0,430.0 L742.0,429.1 L746.0,426.3 L750.0,424.5 L754.0,422.6 L757.0,421.7 L761.0,420.8 L765.0,419.8 L768.0,418.9 L773.0,418.0 L773.0,348.0 L774.0,347.0 L774.0,276.0 L776.0,278.2 L779.0,279.9 L785.0,280.9 L790.0,283.1 L800.0,284.8 L807.0,285.8 L819.0,287.0 L829.0,287.0 L829.0,360.0 L830.0,361.0 L830.0,430.0 L830.0,429.1 L834.0,426.5 L838.0,424.7 L842.0,422.9 L845.0,422.0 L849.0,421.2 L853.0,420.3 L856.0,419.4 L862.0,418.5 L862.0,348.0 L863.0,347.0 L863.0,279.0 L865.0,280.5 L868.0,281.7 L874.0,282.3 L879.0,283.8 L889.0,285.0 L896.0,285.7 L908.0,286.5 L918.0,286.5 L918.0,360.0 L919.0,361.0 L919.0,430.0 L919.0,429.2 L923.0,426.8 L927.0,425.2 L931.0,423.5 L934.0,422.7 L938.0,421.9 L942.0,421.1 L945.0,420.3 L950.0,419.5 L950.0,348.0 L951.0,347.0 L951.0,280.0 L953.0,281.4 L956.0,282.4 L962.0,283.0 L967.0,284.4 L977.0,285.4 L978.0,285.0 L985.0,285.0" fill="none" stroke="#ff0000" stroke-width="2" stroke-linejoin="bevel"/><rect x="40" y="476" width="945" height="2" fill="#0000ff" /><line x1="40" y1="478.5" x2="980" y2="478.5" stroke="#0000ff" stroke-width="1" stroke-dasharray="3 5 2 6"/><rect x="148" y="475" width="2" height="1" fill="#0000ff" /><rect x="420" y="475" width="2" height="1" fill="#0000ff" /><rect x="505" y="475" width="2" height="1" fill="#0000ff" /><rect x="583" y="475" width="2" height="1" fill="#0000ff" /><rect x="664" y="475" width="2" height="1" fill="#0000ff" /><rect x="846" y="475" width="2" height="1" fill="#0000ff" /><rect x="915" y="475" width="2" height="1" fill="#0000ff" /><path d="M985,471 L980,478.5 L985,486 Z" fill="#0000ff"/><rect x="981" y="478" width="3" height="1" fill="#ffffff" /><rect x="981" y="479" width="1" height="3" fill="#ffffff" /><rect x="981" y="482" width="3" height="1" fill="#ffffff" /><rect x="981" y="474.5" width="3" height="1" fill="#ffffff" /><path d="M986,476.5 L989,473 H992 V480 H989 Z" fill="#0000ff"/><rect x="387" y="57" width="1" height="462" fill="#800080" /><path d="M380,57 L395,57 L387.5,64 Z" fill="#800080"/><path d="M386.5,59 L387.5,58 V62.5 M386,62.5 H389" stroke="#ffffff" stroke-width="1" fill="none"/><rect x="420" y="57" width="1" height="462" fill="#008000" /><path d="M413,57 L428,57 L420.5,64 Z" fill="#008000"/><path d="M419,58.5 H421.5 V60.5 H419 V62.5 H422" stroke="#ffffff" stroke-width="1" fill="none"/><rect x="40" y="541" width="929" height="15" fill="#d0d0c8" /><rect x="55" y="541" width="914" height="1" fill="#ffffff" /><rect x="55" y="555" width="914" height="1" fill="#404040" /><rect x="40" y="541" width="15" height="15" fill="#d0d0c8" /><rect x="40" y="541" width="15" height="1" fill="#fff" /><rect x="40" y="541" width="1" height="15" fill="#fff" /><rect x="40" y="555" width="15" height="1" fill="#404040" /><rect x="54" y="541" width="1" height="15" fill="#404040" /><path d="M44,548 L48,544 L48,552 Z" fill="#000"/><rect x="969" y="541" width="16" height="15" fill="#d0d0c8" /><rect x="969" y="541" width="16" height="1" fill="#fff" /><rect x="969" y="541" width="1" height="15" fill="#fff" /><rect x="969" y="555" width="16" height="1" fill="#404040" /><rect x="984" y="541" width="1" height="15" fill="#404040" /><path d="M980,548 L976,544 L976,552 Z" fill="#000"/><rect x="55" y="541" width="1" height="15" fill="#fff" /><rect x="7.5" y="540.5" width="13" height="15" rx="2" fill="#e6e4de" stroke="#888"/><rect x="22.5" y="540.5" width="13" height="15" rx="2" fill="#e6e4de" stroke="#888"/><rect x="11" y="550" width="2" height="2" fill="#0000ff" /><rect x="14" y="550" width="2" height="2" fill="#0000ff" /><rect x="26" y="550" width="2" height="2" fill="#ff0000" /><rect x="29" y="550" width="2" height="2" fill="#ff0000" /><rect x="512.5" y="559.5" width="18" height="7" rx="3.5" fill="#e8e6e0" stroke="#777"/><path d="M518,562 L525,562 L521.5,565 Z" fill="#000"/><rect x="4" y="574" width="1016" height="1" fill="#858585" /><rect x="4" y="574" width="1" height="104" fill="#858585" /><rect x="4" y="677" width="1016" height="1" fill="#858585" /><rect x="0" y="680" width="1023" height="1" fill="#808080" /><rect x="0" y="681" width="1024" height="1" fill="#404040" /><rect x="0" y="682" width="1024" height="2" fill="#e4e4dc" /><rect x="0" y="684" width="1023" height="1" fill="#808080" /><rect x="0" y="684" width="1" height="15" fill="#808080" /><rect x="1023" y="682" width="1" height="18" fill="#ffffff" /><rect x="0" y="699" width="1024" height="1" fill="#ffffff" /><rect x="9" y="582" width="3" height="1" fill="#c8c4bc" /><rect x="9" y="584" width="3" height="1" fill="#c8c4bc" /><rect x="9" y="586" width="3" height="1" fill="#c8c4bc" /><rect x="9" y="588" width="3" height="1" fill="#c8c4bc" /><rect x="9" y="590" width="3" height="1" fill="#c8c4bc" /><rect x="9" y="592" width="3" height="1" fill="#b8b4ac" /><rect x="9" y="594" width="3" height="1" fill="#b8b4ac" /><rect x="9" y="596" width="3" height="1" fill="#b8b4ac" /><rect x="9" y="598" width="3" height="1" fill="#b8b4ac" /><rect x="9" y="600" width="3" height="1" fill="#a8a098" /><rect x="9" y="602" width="3" height="1" fill="#a8a098" /><rect x="9" y="604" width="3" height="1" fill="#a8a098" /><rect x="9" y="606" width="3" height="1" fill="#a8a098" /><rect x="9" y="608" width="3" height="1" fill="#989088" /><rect x="9" y="610" width="3" height="1" fill="#989088" /><rect x="9" y="612" width="3" height="1" fill="#989088" /><rect x="9" y="614" width="3" height="1" fill="#989088" /><rect x="9" y="616" width="3" height="1" fill="#888878" /><rect x="9" y="618" width="3" height="1" fill="#888878" /><rect x="9" y="620" width="3" height="1" fill="#888878" /><rect x="9" y="622" width="3" height="1" fill="#888878" /><rect x="9" y="624" width="3" height="1" fill="#787868" /><rect x="9" y="626" width="3" height="1" fill="#787868" /><rect x="9" y="628" width="3" height="1" fill="#787868" /><rect x="9" y="630" width="3" height="1" fill="#787868" /><rect x="9" y="632" width="3" height="1" fill="#686860" /><rect x="9" y="634" width="3" height="1" fill="#686860" /><rect x="9" y="636" width="3" height="1" fill="#686860" /><rect x="9" y="638" width="3" height="1" fill="#686860" /><rect x="9" y="640" width="3" height="1" fill="#585850" /><rect x="9" y="642" width="3" height="1" fill="#585850" /><rect x="9" y="644" width="3" height="1" fill="#585850" /><rect x="9" y="646" width="3" height="1" fill="#585850" /><rect x="9" y="648" width="3" height="1" fill="#484840" /><rect x="9" y="650" width="3" height="1" fill="#484840" /><rect x="9" y="652" width="3" height="1" fill="#484840" /><rect x="9" y="654" width="3" height="1" fill="#484840" /><rect x="9" y="656" width="3" height="1" fill="#383830" /><rect x="9" y="658" width="3" height="1" fill="#383830" /><rect x="9" y="660" width="3" height="1" fill="#383830" /><rect x="9" y="662" width="3" height="1" fill="#383830" /><rect x="9" y="664" width="3" height="1" fill="#303030" /><rect x="9" y="666" width="3" height="1" fill="#303030" /><rect x="9" y="668" width="3" height="1" fill="#303030" /><rect x="9" y="670" width="3" height="1" fill="#303030" /><rect x="323" y="582" width="3" height="1" fill="#c8c4bc" /><rect x="323" y="584" width="3" height="1" fill="#c8c4bc" /><rect x="323" y="586" width="3" height="1" fill="#c8c4bc" /><rect x="323" y="588" width="3" height="1" fill="#c8c4bc" /><rect x="323" y="590" width="3" height="1" fill="#c8c4bc" /><rect x="323" y="592" width="3" height="1" fill="#b8b4ac" /><rect x="323" y="594" width="3" height="1" fill="#b8b4ac" /><rect x="323" y="596" width="3" height="1" fill="#b8b4ac" /><rect x="323" y="598" width="3" height="1" fill="#b8b4ac" /><rect x="323" y="600" width="3" height="1" fill="#a8a098" /><rect x="323" y="602" width="3" height="1" fill="#a8a098" /><rect x="323" y="604" width="3" height="1" fill="#a8a098" /><rect x="323" y="606" width="3" height="1" fill="#a8a098" /><rect x="323" y="608" width="3" height="1" fill="#989088" /><rect x="323" y="610" width="3" height="1" fill="#989088" /><rect x="323" y="612" width="3" height="1" fill="#989088" /><rect x="323" y="614" width="3" height="1" fill="#989088" /><rect x="323" y="616" width="3" height="1" fill="#888878" /><rect x="323" y="618" width="3" height="1" fill="#888878" /><rect x="323" y="620" width="3" height="1" fill="#888878" /><rect x="323" y="622" width="3" height="1" fill="#888878" /><rect x="323" y="624" width="3" height="1" fill="#787868" /><rect x="323" y="626" width="3" height="1" fill="#787868" /><rect x="323" y="628" width="3" height="1" fill="#787868" /><rect x="323" y="630" width="3" height="1" fill="#787868" /><rect x="323" y="632" width="3" height="1" fill="#686860" /><rect x="323" y="634" width="3" height="1" fill="#686860" /><rect x="323" y="636" width="3" height="1" fill="#686860" /><rect x="323" y="638" width="3" height="1" fill="#686860" /><rect x="323" y="640" width="3" height="1" fill="#585850" /><rect x="323" y="642" width="3" height="1" fill="#585850" /><rect x="323" y="644" width="3" height="1" fill="#585850" /><rect x="323" y="646" width="3" height="1" fill="#585850" /><rect x="323" y="648" width="3" height="1" fill="#484840" /><rect x="323" y="650" width="3" height="1" fill="#484840" /><rect x="323" y="652" width="3" height="1" fill="#484840" /><rect x="323" y="654" width="3" height="1" fill="#484840" /><rect x="323" y="656" width="3" height="1" fill="#383830" /><rect x="323" y="658" width="3" height="1" fill="#383830" /><rect x="323" y="660" width="3" height="1" fill="#383830" /><rect x="323" y="662" width="3" height="1" fill="#383830" /><rect x="323" y="664" width="3" height="1" fill="#303030" /><rect x="323" y="666" width="3" height="1" fill="#303030" /><rect x="323" y="668" width="3" height="1" fill="#303030" /><rect x="323" y="670" width="3" height="1" fill="#303030" /><rect x="17" y="585" width="95" height="1" fill="#a0988f" /><rect x="17" y="585" width="1" height="89" fill="#a0988f" /><rect x="111" y="585" width="1" height="89" fill="#a0988f" /><rect x="17" y="673" width="95" height="1" fill="#a0988f" /><rect x="24" y="579" width="86" height="10" fill="#d0d0c8" /><text x="27" y="589" font-size="12" fill="#ff0000" text-anchor="start" font-weight="bold" textLength="80" lengthAdjust="spacingAndGlyphs" >Канал А (В/э)</text><rect x="114" y="585" width="96" height="1" fill="#a0988f" /><rect x="114" y="585" width="1" height="89" fill="#a0988f" /><rect x="209" y="585" width="1" height="89" fill="#a0988f" /><rect x="114" y="673" width="96" height="1" fill="#a0988f" /><rect x="121" y="579" width="86" height="10" fill="#d0d0c8" /><text x="124" y="589" font-size="12" fill="#0000ff" text-anchor="start" font-weight="bold" textLength="80" lengthAdjust="spacingAndGlyphs" >Канал В (В/э)</text><rect x="211" y="585" width="107" height="1" fill="#a0988f" /><rect x="211" y="585" width="1" height="89" fill="#a0988f" /><rect x="317" y="585" width="1" height="89" fill="#a0988f" /><rect x="211" y="673" width="107" height="1" fill="#a0988f" /><rect x="218" y="579" width="49" height="10" fill="#d0d0c8" /><text x="221" y="589" font-size="12" fill="#005000" text-anchor="start" font-weight="bold" textLength="43" lengthAdjust="spacingAndGlyphs" >Период</text><rect x="331" y="585" width="102" height="1" fill="#a0988f" /><rect x="331" y="585" width="1" height="89" fill="#a0988f" /><rect x="432" y="585" width="1" height="89" fill="#a0988f" /><rect x="331" y="673" width="102" height="1" fill="#a0988f" /><rect x="338" y="579" width="96" height="10" fill="#d0d0c8" /><text x="341" y="589" font-size="12" fill="#000" text-anchor="start" font-weight="bold" textLength="90" lengthAdjust="spacingAndGlyphs" >Синхронизация</text><rect x="436" y="585" width="284" height="1" fill="#a0988f" /><rect x="436" y="585" width="1" height="42" fill="#a0988f" /><rect x="719" y="585" width="1" height="42" fill="#a0988f" /><rect x="436" y="626" width="284" height="1" fill="#a0988f" /><rect x="443" y="579" width="221" height="10" fill="#d0d0c8" /><text x="446" y="589" font-size="12" fill="#000" text-anchor="start" font-weight="bold" textLength="215" lengthAdjust="spacingAndGlyphs" >Параметры сигнала под маркерами</text><rect x="436" y="635" width="173" height="1" fill="#a0988f" /><rect x="436" y="635" width="1" height="38" fill="#a0988f" /><rect x="608" y="635" width="1" height="38" fill="#a0988f" /><rect x="436" y="672" width="173" height="1" fill="#a0988f" /><rect x="443" y="629" width="167" height="10" fill="#d0d0c8" /><text x="446" y="639" font-size="12" fill="#000" text-anchor="start" font-weight="bold" textLength="161" lengthAdjust="spacingAndGlyphs" >Общие параметры сигнала</text><rect x="722" y="585" width="66" height="1" fill="#a0988f" /><rect x="722" y="585" width="1" height="42" fill="#a0988f" /><rect x="787" y="585" width="1" height="42" fill="#a0988f" /><rect x="722" y="626" width="66" height="1" fill="#a0988f" /><rect x="729" y="579" width="51" height="10" fill="#d0d0c8" /><text x="732" y="589" font-size="12" fill="#000" text-anchor="start" font-weight="bold" textLength="45" lengthAdjust="spacingAndGlyphs" >Фильтр</text><rect x="610" y="635" width="178" height="1" fill="#a0988f" /><rect x="610" y="635" width="1" height="38" fill="#a0988f" /><rect x="787" y="635" width="1" height="38" fill="#a0988f" /><rect x="610" y="672" width="178" height="1" fill="#a0988f" /><rect x="617" y="629" width="77" height="10" fill="#d0d0c8" /><text x="620" y="639" font-size="12" fill="#000" text-anchor="start" font-weight="bold" textLength="71" lengthAdjust="spacingAndGlyphs" >Управление</text><defs>
<linearGradient id="knobg" x1="0.15" y1="0.1" x2="0.85" y2="0.9"><stop offset="0" stop-color="#e6e6e6"/><stop offset="0.5" stop-color="#b4b4b4"/><stop offset="1" stop-color="#868686"/></linearGradient>
<linearGradient id="peach" x1="0" y1="0" x2="0" y2="1"><stop offset="0" stop-color="#fbeee8"/><stop offset="0.3" stop-color="#f0c4a4"/><stop offset="0.6" stop-color="#f2d8c8"/><stop offset="1" stop-color="#fff4f0"/></linearGradient>
<linearGradient id="blueb" x1="0" y1="0" x2="0" y2="1"><stop offset="0" stop-color="#e8f0fa"/><stop offset="0.3" stop-color="#a8c8f0"/><stop offset="0.6" stop-color="#c8dcf4"/><stop offset="1" stop-color="#f0f6ff"/></linearGradient>
<linearGradient id="greenb" x1="0" y1="0" x2="0" y2="1"><stop offset="0" stop-color="#d8f8e0"/><stop offset="0.3" stop-color="#88e0a4"/><stop offset="0.7" stop-color="#c0ecd0"/><stop offset="1" stop-color="#f4fff8"/></linearGradient>
<linearGradient id="grayb" x1="0" y1="0" x2="0" y2="1"><stop offset="0" stop-color="#f4f2ee"/><stop offset="0.5" stop-color="#dcd8d0"/><stop offset="1" stop-color="#ece8e2"/></linearGradient>
<linearGradient id="btnb" x1="0" y1="0" x2="0" y2="1"><stop offset="0" stop-color="#eeede8"/><stop offset="0.35" stop-color="#d8d4cc"/><stop offset="0.55" stop-color="#e4e0da"/><stop offset="0.85" stop-color="#eeece8"/><stop offset="1" stop-color="#cfcbc4"/></linearGradient>
</defs><rect x="20.5" y="590.5" width="13" height="13" rx="3" fill="url(#btnb)" stroke="#8a8a8a"/><path d="M23.5,601 V594.5 L25,593 H26 L27.5,594.5 V601 M23.5,597.5 H27.5" stroke="#000" stroke-width="1.3" fill="none"/><path d="M30.5,593 V600" stroke="#000" stroke-width="1.2"/><path d="M28.8,594.5 L30.5,592 L32.2,594.5 Z M28.8,598.5 L30.5,601 L32.2,598.5 Z" fill="#000"/><rect x="20.5" y="605.5" width="13" height="13" rx="3" fill="url(#btnb)" stroke="#8a8a8a"/><path d="M23.5,616 V609.5 L25,608 H26 L27.5,609.5 V616 M23.5,612.5 H27.5" stroke="#9090a0" stroke-width="1.3" fill="none"/><path d="M30.5,612 V616" stroke="#9090a0" stroke-width="1"/><rect x="29.5" y="607.5" width="2.5" height="2.5" fill="none" stroke="#9090a0" stroke-width="0.9"/><path d="M29,614 L30.5,616 L32,614 Z" fill="#9090a0"/><rect x="116.5" y="590.5" width="13" height="13" rx="3" fill="url(#btnb)" stroke="#8a8a8a"/><path d="M119.5,601 V594.5 L121,593 H122 L123.5,594.5 V601 M119.5,597.5 H123.5" stroke="#000" stroke-width="1.3" fill="none"/><path d="M126.5,593 V600" stroke="#000" stroke-width="1.2"/><path d="M124.8,594.5 L126.5,592 L128.2,594.5 Z M124.8,598.5 L126.5,601 L128.2,598.5 Z" fill="#000"/><rect x="116.5" y="605.5" width="13" height="13" rx="3" fill="url(#btnb)" stroke="#8a8a8a"/><path d="M119.5,616 V609.5 L121,608 H122 L123.5,609.5 V616 M119.5,612.5 H123.5" stroke="#9090a0" stroke-width="1.3" fill="none"/><path d="M126.5,612 V616" stroke="#9090a0" stroke-width="1"/><rect x="125.5" y="607.5" width="2.5" height="2.5" fill="none" stroke="#9090a0" stroke-width="0.9"/><path d="M125,614 L126.5,616 L128,614 Z" fill="#9090a0"/><line x1="81.6" y1="638.1" x2="83.4" y2="639.9" stroke="#9a9890" stroke-width="1"/><line x1="83.4" y1="636.2" x2="85.3" y2="637.7" stroke="#9a9890" stroke-width="1"/><line x1="84.8" y1="634.0" x2="87.0" y2="635.3" stroke="#9a9890" stroke-width="1"/><line x1="86.0" y1="631.7" x2="88.3" y2="632.7" stroke="#9a9890" stroke-width="1"/><line x1="87.0" y1="629.3" x2="89.4" y2="630.0" stroke="#9a9890" stroke-width="1"/><line x1="87.6" y1="626.7" x2="90.0" y2="627.2" stroke="#9a9890" stroke-width="1"/><line x1="87.9" y1="624.1" x2="90.4" y2="624.3" stroke="#9a9890" stroke-width="1"/><line x1="87.8" y1="621.5" x2="90.3" y2="621.3" stroke="#9a9890" stroke-width="1"/><line x1="87.5" y1="618.9" x2="90.0" y2="618.4" stroke="#9a9890" stroke-width="1"/><line x1="86.9" y1="616.4" x2="89.2" y2="615.6" stroke="#9a9890" stroke-width="1"/><line x1="85.9" y1="614.0" x2="88.2" y2="612.9" stroke="#9a9890" stroke-width="1"/><line x1="84.6" y1="611.7" x2="86.8" y2="610.3" stroke="#9a9890" stroke-width="1"/><line x1="83.1" y1="609.5" x2="85.1" y2="608.0" stroke="#9a9890" stroke-width="1"/><line x1="81.4" y1="607.6" x2="83.1" y2="605.8" stroke="#9a9890" stroke-width="1"/><line x1="79.4" y1="605.9" x2="80.9" y2="603.9" stroke="#9a9890" stroke-width="1"/><line x1="77.2" y1="604.5" x2="78.5" y2="602.3" stroke="#9a9890" stroke-width="1"/><line x1="74.9" y1="603.3" x2="75.8" y2="601.0" stroke="#9a9890" stroke-width="1"/><line x1="72.4" y1="602.4" x2="73.1" y2="600.0" stroke="#9a9890" stroke-width="1"/><line x1="69.8" y1="601.9" x2="70.2" y2="599.4" stroke="#9a9890" stroke-width="1"/><line x1="67.2" y1="601.6" x2="67.3" y2="599.1" stroke="#9a9890" stroke-width="1"/><line x1="64.6" y1="601.7" x2="64.4" y2="599.2" stroke="#9a9890" stroke-width="1"/><line x1="62.1" y1="602.1" x2="61.5" y2="599.6" stroke="#9a9890" stroke-width="1"/><line x1="59.5" y1="602.8" x2="58.7" y2="600.4" stroke="#9a9890" stroke-width="1"/><line x1="57.1" y1="603.8" x2="56.0" y2="601.5" stroke="#9a9890" stroke-width="1"/><line x1="54.8" y1="605.1" x2="53.5" y2="603.0" stroke="#9a9890" stroke-width="1"/><line x1="52.7" y1="606.6" x2="51.1" y2="604.7" stroke="#9a9890" stroke-width="1"/><line x1="50.8" y1="608.4" x2="49.0" y2="606.7" stroke="#9a9890" stroke-width="1"/><line x1="49.2" y1="610.4" x2="47.2" y2="609.0" stroke="#9a9890" stroke-width="1"/><line x1="47.8" y1="612.6" x2="45.6" y2="611.4" stroke="#9a9890" stroke-width="1"/><line x1="46.7" y1="615.0" x2="44.3" y2="614.0" stroke="#9a9890" stroke-width="1"/><line x1="45.8" y1="617.5" x2="43.4" y2="616.8" stroke="#9a9890" stroke-width="1"/><line x1="45.3" y1="620.0" x2="42.8" y2="619.7" stroke="#9a9890" stroke-width="1"/><line x1="45.1" y1="622.6" x2="42.6" y2="622.6" stroke="#9a9890" stroke-width="1"/><line x1="45.2" y1="625.2" x2="42.7" y2="625.5" stroke="#9a9890" stroke-width="1"/><line x1="45.6" y1="627.8" x2="43.2" y2="628.4" stroke="#9a9890" stroke-width="1"/><line x1="46.4" y1="630.3" x2="44.0" y2="631.2" stroke="#9a9890" stroke-width="1"/><line x1="47.4" y1="632.7" x2="45.2" y2="633.9" stroke="#9a9890" stroke-width="1"/><line x1="48.8" y1="635.0" x2="46.7" y2="636.4" stroke="#9a9890" stroke-width="1"/><line x1="50.3" y1="637.0" x2="48.5" y2="638.7" stroke="#9a9890" stroke-width="1"/><line x1="51.4" y1="638.1" x2="48.5" y2="641.0" stroke="#000" stroke-width="1.1"/><text x="44" y="643" font-size="9" fill="#000" text-anchor="end" font-weight="normal" >0,1В</text><line x1="45.1" y1="623.0" x2="41.1" y2="623.0" stroke="#000" stroke-width="1.1"/><text x="40" y="628" font-size="9" fill="#000" text-anchor="end" font-weight="normal" >0,5В</text><line x1="51.4" y1="607.9" x2="48.5" y2="605.0" stroke="#000" stroke-width="1.1"/><text x="47" y="610" font-size="9" fill="#000" text-anchor="end" font-weight="normal" >1В</text><line x1="63.9" y1="601.8" x2="63.4" y2="597.8" stroke="#000" stroke-width="1.1"/><text x="68" y="599" font-size="9" fill="#000" text-anchor="middle" font-weight="normal" >5В</text><line x1="80.3" y1="606.6" x2="82.8" y2="603.5" stroke="#000" stroke-width="1.1"/><text x="83" y="606" font-size="9" fill="#000" text-anchor="start" font-weight="normal" >10В</text><line x1="87.8" y1="621.1" x2="91.8" y2="620.8" stroke="#000" stroke-width="1.1"/><text x="92" y="621" font-size="9" fill="#000" text-anchor="start" font-weight="normal" >15В</text><line x1="82.9" y1="636.8" x2="86.0" y2="639.3" stroke="#000" stroke-width="1.1"/><text x="88" y="643" font-size="9" fill="#000" text-anchor="start" font-weight="normal" >20В</text><circle cx="66.5" cy="623" r="19.4" fill="url(#knobg)"/><circle cx="66.0" cy="622.5" r="12" fill="#d6d6d4"/><path d="M76.9,629.5 L80.9,635.0 L73.4,634.5 Z" fill="#ff0000"/><text x="66.0" y="626" font-size="9" fill="#ff0000" text-anchor="middle" font-weight="normal" >20В</text><line x1="178.0" y1="637.8" x2="179.8" y2="639.6" stroke="#9a9890" stroke-width="1"/><line x1="179.7" y1="635.9" x2="181.7" y2="637.5" stroke="#9a9890" stroke-width="1"/><line x1="181.2" y1="633.8" x2="183.3" y2="635.1" stroke="#9a9890" stroke-width="1"/><line x1="182.4" y1="631.5" x2="184.7" y2="632.6" stroke="#9a9890" stroke-width="1"/><line x1="183.3" y1="629.1" x2="185.7" y2="629.9" stroke="#9a9890" stroke-width="1"/><line x1="183.9" y1="626.6" x2="186.3" y2="627.1" stroke="#9a9890" stroke-width="1"/><line x1="184.2" y1="624.1" x2="186.7" y2="624.2" stroke="#9a9890" stroke-width="1"/><line x1="184.1" y1="621.5" x2="186.6" y2="621.4" stroke="#9a9890" stroke-width="1"/><line x1="183.8" y1="619.0" x2="186.3" y2="618.5" stroke="#9a9890" stroke-width="1"/><line x1="183.2" y1="616.5" x2="185.5" y2="615.7" stroke="#9a9890" stroke-width="1"/><line x1="182.2" y1="614.1" x2="184.5" y2="613.1" stroke="#9a9890" stroke-width="1"/><line x1="181.0" y1="611.9" x2="183.1" y2="610.5" stroke="#9a9890" stroke-width="1"/><line x1="179.5" y1="609.8" x2="181.5" y2="608.2" stroke="#9a9890" stroke-width="1"/><line x1="177.8" y1="607.9" x2="179.5" y2="606.1" stroke="#9a9890" stroke-width="1"/><line x1="175.8" y1="606.2" x2="177.3" y2="604.2" stroke="#9a9890" stroke-width="1"/><line x1="173.7" y1="604.8" x2="174.9" y2="602.6" stroke="#9a9890" stroke-width="1"/><line x1="171.4" y1="603.7" x2="172.4" y2="601.4" stroke="#9a9890" stroke-width="1"/><line x1="169.0" y1="602.8" x2="169.7" y2="600.4" stroke="#9a9890" stroke-width="1"/><line x1="166.5" y1="602.3" x2="166.9" y2="599.8" stroke="#9a9890" stroke-width="1"/><line x1="163.9" y1="602.0" x2="164.0" y2="599.5" stroke="#9a9890" stroke-width="1"/><line x1="161.4" y1="602.1" x2="161.2" y2="599.6" stroke="#9a9890" stroke-width="1"/><line x1="158.8" y1="602.5" x2="158.3" y2="600.0" stroke="#9a9890" stroke-width="1"/><line x1="156.4" y1="603.1" x2="155.5" y2="600.8" stroke="#9a9890" stroke-width="1"/><line x1="154.0" y1="604.1" x2="152.9" y2="601.9" stroke="#9a9890" stroke-width="1"/><line x1="151.8" y1="605.4" x2="150.4" y2="603.3" stroke="#9a9890" stroke-width="1"/><line x1="149.7" y1="606.9" x2="148.1" y2="605.0" stroke="#9a9890" stroke-width="1"/><line x1="147.8" y1="608.7" x2="146.0" y2="607.0" stroke="#9a9890" stroke-width="1"/><line x1="146.2" y1="610.7" x2="144.2" y2="609.2" stroke="#9a9890" stroke-width="1"/><line x1="144.8" y1="612.8" x2="142.6" y2="611.6" stroke="#9a9890" stroke-width="1"/><line x1="143.7" y1="615.1" x2="141.4" y2="614.2" stroke="#9a9890" stroke-width="1"/><line x1="142.9" y1="617.6" x2="140.5" y2="616.9" stroke="#9a9890" stroke-width="1"/><line x1="142.4" y1="620.1" x2="139.9" y2="619.7" stroke="#9a9890" stroke-width="1"/><line x1="142.2" y1="622.6" x2="139.7" y2="622.6" stroke="#9a9890" stroke-width="1"/><line x1="142.3" y1="625.2" x2="139.8" y2="625.5" stroke="#9a9890" stroke-width="1"/><line x1="142.7" y1="627.7" x2="140.3" y2="628.3" stroke="#9a9890" stroke-width="1"/><line x1="143.5" y1="630.2" x2="141.1" y2="631.0" stroke="#9a9890" stroke-width="1"/><line x1="144.5" y1="632.5" x2="142.3" y2="633.7" stroke="#9a9890" stroke-width="1"/><line x1="145.8" y1="634.7" x2="143.7" y2="636.1" stroke="#9a9890" stroke-width="1"/><line x1="147.4" y1="636.8" x2="145.5" y2="638.4" stroke="#9a9890" stroke-width="1"/><line x1="148.4" y1="637.8" x2="145.5" y2="640.7" stroke="#000" stroke-width="1.1"/><text x="141" y="643" font-size="9" fill="#000" text-anchor="end" font-weight="normal" >0,1В</text><line x1="142.2" y1="623.0" x2="138.2" y2="623.0" stroke="#000" stroke-width="1.1"/><text x="137" y="628" font-size="9" fill="#000" text-anchor="end" font-weight="normal" >0,5В</text><line x1="148.4" y1="608.2" x2="145.5" y2="605.3" stroke="#000" stroke-width="1.1"/><text x="144" y="610" font-size="9" fill="#000" text-anchor="end" font-weight="normal" >1В</text><line x1="160.6" y1="602.2" x2="160.2" y2="598.2" stroke="#000" stroke-width="1.1"/><text x="165" y="599" font-size="9" fill="#000" text-anchor="middle" font-weight="normal" >5В</text><line x1="176.7" y1="606.9" x2="179.3" y2="603.8" stroke="#000" stroke-width="1.1"/><text x="180" y="606" font-size="9" fill="#000" text-anchor="start" font-weight="normal" >10В</text><line x1="184.1" y1="621.2" x2="188.1" y2="620.8" stroke="#000" stroke-width="1.1"/><text x="189" y="621" font-size="9" fill="#000" text-anchor="start" font-weight="normal" >15В</text><line x1="179.3" y1="636.5" x2="182.4" y2="639.1" stroke="#000" stroke-width="1.1"/><text x="185" y="643" font-size="9" fill="#000" text-anchor="start" font-weight="normal" >20В</text><circle cx="163.2" cy="623" r="19" fill="url(#knobg)"/><circle cx="162.7" cy="622.5" r="11.5" fill="#d6d6d4"/><path d="M173.3,629.2 L177.3,634.7 L169.8,634.2 Z" fill="#0000ff"/><text x="162.7" y="626" font-size="9" fill="#0000ff" text-anchor="middle" font-weight="normal" >20В</text><line x1="277.1" y1="641.1" x2="278.9" y2="642.9" stroke="#9a9890" stroke-width="1"/><line x1="279.0" y1="639.0" x2="281.0" y2="640.5" stroke="#9a9890" stroke-width="1"/><line x1="280.6" y1="636.6" x2="282.8" y2="637.9" stroke="#9a9890" stroke-width="1"/><line x1="282.0" y1="634.1" x2="284.3" y2="635.1" stroke="#9a9890" stroke-width="1"/><line x1="283.0" y1="631.4" x2="285.4" y2="632.1" stroke="#9a9890" stroke-width="1"/><line x1="283.6" y1="628.6" x2="286.1" y2="629.0" stroke="#9a9890" stroke-width="1"/><line x1="284.0" y1="625.7" x2="286.5" y2="625.9" stroke="#9a9890" stroke-width="1"/><line x1="283.9" y1="622.9" x2="286.4" y2="622.7" stroke="#9a9890" stroke-width="1"/><line x1="283.6" y1="620.0" x2="286.0" y2="619.5" stroke="#9a9890" stroke-width="1"/><line x1="282.8" y1="617.2" x2="285.2" y2="616.5" stroke="#9a9890" stroke-width="1"/><line x1="281.8" y1="614.6" x2="284.1" y2="613.5" stroke="#9a9890" stroke-width="1"/><line x1="280.4" y1="612.0" x2="282.5" y2="610.7" stroke="#9a9890" stroke-width="1"/><line x1="278.8" y1="609.7" x2="280.7" y2="608.1" stroke="#9a9890" stroke-width="1"/><line x1="276.8" y1="607.6" x2="278.6" y2="605.8" stroke="#9a9890" stroke-width="1"/><line x1="274.6" y1="605.7" x2="276.1" y2="603.7" stroke="#9a9890" stroke-width="1"/><line x1="272.2" y1="604.1" x2="273.5" y2="602.0" stroke="#9a9890" stroke-width="1"/><line x1="269.7" y1="602.9" x2="270.7" y2="600.6" stroke="#9a9890" stroke-width="1"/><line x1="267.0" y1="601.9" x2="267.7" y2="599.5" stroke="#9a9890" stroke-width="1"/><line x1="264.2" y1="601.3" x2="264.6" y2="598.8" stroke="#9a9890" stroke-width="1"/><line x1="261.3" y1="601.0" x2="261.4" y2="598.5" stroke="#9a9890" stroke-width="1"/><line x1="258.5" y1="601.1" x2="258.2" y2="598.6" stroke="#9a9890" stroke-width="1"/><line x1="255.6" y1="601.5" x2="255.1" y2="599.1" stroke="#9a9890" stroke-width="1"/><line x1="252.8" y1="602.3" x2="252.0" y2="599.9" stroke="#9a9890" stroke-width="1"/><line x1="250.2" y1="603.4" x2="249.1" y2="601.1" stroke="#9a9890" stroke-width="1"/><line x1="247.7" y1="604.8" x2="246.3" y2="602.7" stroke="#9a9890" stroke-width="1"/><line x1="245.4" y1="606.5" x2="243.8" y2="604.6" stroke="#9a9890" stroke-width="1"/><line x1="243.3" y1="608.5" x2="241.5" y2="606.8" stroke="#9a9890" stroke-width="1"/><line x1="241.5" y1="610.7" x2="239.5" y2="609.2" stroke="#9a9890" stroke-width="1"/><line x1="239.9" y1="613.1" x2="237.8" y2="611.9" stroke="#9a9890" stroke-width="1"/><line x1="238.7" y1="615.7" x2="236.4" y2="614.8" stroke="#9a9890" stroke-width="1"/><line x1="237.8" y1="618.4" x2="235.4" y2="617.8" stroke="#9a9890" stroke-width="1"/><line x1="237.2" y1="621.2" x2="234.8" y2="620.9" stroke="#9a9890" stroke-width="1"/><line x1="237.0" y1="624.1" x2="234.5" y2="624.0" stroke="#9a9890" stroke-width="1"/><line x1="237.1" y1="627.0" x2="234.6" y2="627.2" stroke="#9a9890" stroke-width="1"/><line x1="237.6" y1="629.8" x2="235.2" y2="630.3" stroke="#9a9890" stroke-width="1"/><line x1="238.4" y1="632.5" x2="236.1" y2="633.4" stroke="#9a9890" stroke-width="1"/><line x1="239.6" y1="635.2" x2="237.3" y2="636.3" stroke="#9a9890" stroke-width="1"/><line x1="241.0" y1="637.6" x2="238.9" y2="639.0" stroke="#9a9890" stroke-width="1"/><line x1="242.8" y1="639.9" x2="240.9" y2="641.6" stroke="#9a9890" stroke-width="1"/><line x1="243.9" y1="641.1" x2="241.1" y2="643.9" stroke="#000" stroke-width="1.1"/><text x="238" y="643" font-size="9" fill="#000" text-anchor="end" font-weight="normal" >10мс</text><line x1="237.0" y1="624.5" x2="233.0" y2="624.5" stroke="#000" stroke-width="1.1"/><text x="231" y="630" font-size="9" fill="#000" text-anchor="end" font-weight="normal" >5мс</text><line x1="241.0" y1="611.4" x2="237.7" y2="609.1" stroke="#000" stroke-width="1.1"/><text x="236" y="611" font-size="9" fill="#000" text-anchor="end" font-weight="normal" >1мс</text><line x1="252.5" y1="602.4" x2="251.1" y2="598.7" stroke="#000" stroke-width="1.1"/><text x="254" y="598" font-size="9" fill="#000" text-anchor="end" font-weight="normal" >0.5мс</text><line x1="269.3" y1="602.7" x2="270.8" y2="599.0" stroke="#000" stroke-width="1.1"/><text x="268" y="598" font-size="9" fill="#000" text-anchor="start" font-weight="normal" >0.1мс</text><line x1="279.8" y1="611.0" x2="283.0" y2="608.7" stroke="#000" stroke-width="1.1"/><text x="285" y="611" font-size="9" fill="#000" text-anchor="start" font-weight="normal" >50мкс</text><line x1="284.0" y1="624.5" x2="288.0" y2="624.5" stroke="#000" stroke-width="1.1"/><text x="289" y="630" font-size="9" fill="#000" text-anchor="start" font-weight="normal" >10мкс</text><line x1="278.5" y1="639.6" x2="281.6" y2="642.2" stroke="#000" stroke-width="1.1"/><text x="283" y="643" font-size="9" fill="#a0a0a0" text-anchor="start" font-weight="normal" >5мкс</text><circle cx="260.5" cy="624.5" r="21.5" fill="url(#knobg)" stroke="#008000" stroke-width="1.2"/><circle cx="260.0" cy="624.0" r="13" fill="#d6d6d4"/><path d="M268.5,611.5 L274.5,610.7 L273.3,616.5 Z" fill="#005000"/><text x="248.0" y="627.5" font-size="9" fill="#005000" text-anchor="start" font-weight="bold" textLength="24" lengthAdjust="spacingAndGlyphs" >60мкс</text><text x="298" y="597" font-size="11" fill="#ff0000" text-anchor="start" font-weight="normal" textLength="15" lengthAdjust="spacingAndGlyphs" >Buf</text><path d="M23,649 H106 L108,651 V667 L106,669 H23 L21,667 V651 Z" fill="#7a7a7a"/><rect x="23" y="651" width="83" height="16" fill="url(#peach)"/><text x="42.5" y="664" font-size="11" fill="#ff0000" text-anchor="start" font-weight="normal" textLength="45" lengthAdjust="spacingAndGlyphs" >Включен</text><path d="M120,649 H203 L205,651 V667 L203,669 H120 L118,667 V651 Z" fill="#7a7a7a"/><rect x="120" y="651" width="83" height="16" fill="url(#blueb)"/><text x="139.5" y="664" font-size="11" fill="#0000ff" text-anchor="start" font-weight="normal" textLength="45" lengthAdjust="spacingAndGlyphs" >Включен</text><rect x="213.5" y="649.5" width="17" height="18" rx="3" fill="url(#btnb)" stroke="#9a9a9a"/><rect x="232.5" y="649.5" width="17" height="18" rx="3" fill="url(#btnb)" stroke="#9a9a9a"/><rect x="251.5" y="649.5" width="17" height="18" rx="3" fill="url(#btnb)" stroke="#9a9a9a"/><circle cx="220" cy="656" r="5" fill="#e0ecff" stroke="#3050c0" stroke-width="1.5"/><path d="M217.5,656 H222.5 M220,653.5 V658.5" stroke="#2040a0" stroke-width="1.6"/><path d="M224,660 L228,664" stroke="#e0a020" stroke-width="2.5"/><circle cx="239" cy="656" r="5" fill="#e8e8f0" stroke="#6070a0" stroke-width="1.5"/><path d="M236.5,656 H241.5" stroke="#404080" stroke-width="1.6"/><path d="M243,660 L247,664" stroke="#b0b0b0" stroke-width="2.5"/><path d="M255.5,652.5 H262 L265.5,656 V665.5 H255.5 Z" fill="#fafafa" stroke="#b0b0b0"/><rect x="272" y="651" width="43" height="16" fill="#ffffff" /><rect x="303" y="652" width="11" height="14" fill="#d0d0c8" /><path d="M306,658 L311,658 L308.5,661 Z" fill="#000"/><text x="275.5" y="663" font-size="10" fill="#000" text-anchor="start" font-weight="normal" textLength="11.5" lengthAdjust="spacingAndGlyphs" >1:1</text><path d="M337,592 H426 L428,594 V609 L426,611 H337 L335,609 V594 Z" fill="#7a7a7a"/><rect x="337" y="594" width="89" height="15" fill="url(#greenb)"/><text x="356.5" y="607" font-size="11" fill="#004000" text-anchor="start" font-weight="normal" textLength="51" lengthAdjust="spacingAndGlyphs" >Включена</text><path d="M337,612 H364 L366,614 V629 L364,631 H337 L335,629 V614 Z" fill="#7a7a7a"/><rect x="337" y="614" width="27" height="15" fill="url(#peach)"/><text x="348" y="627" font-size="11" fill="#ff0000" text-anchor="start" font-weight="normal" textLength="7" lengthAdjust="spacingAndGlyphs" >A</text><path d="M368,612 H395 L397,614 V629 L395,631 H368 L366,629 V614 Z" fill="#7a7a7a"/><rect x="368" y="614" width="27" height="15" fill="url(#grayb)"/><text x="377.5" y="627" font-size="11" fill="#0000ff" text-anchor="start" font-weight="normal" textLength="6.5" lengthAdjust="spacingAndGlyphs" >B</text><path d="M399,612 H426 L428,614 V629 L426,631 H399 L397,629 V614 Z" fill="#7a7a7a"/><rect x="399" y="614" width="27" height="15" fill="url(#grayb)"/><text x="403.5" y="627" font-size="11" fill="#000080" text-anchor="start" font-weight="normal" textLength="16" lengthAdjust="spacingAndGlyphs" >Ext</text><path d="M337,632 H379 L381,634 V649 L379,651 H337 L335,649 V634 Z" fill="#7a7a7a"/><rect x="337" y="634" width="42" height="15" fill="url(#grayb)"/><path d="M344,647.5 H354 L364.5,636.5 H371" stroke="#000" stroke-width="1.6" fill="none"/><path d="M362.5,637.5 L353.5,641.5 L358.5,646.5 Z" fill="#000"/><path d="M384,632 H426 L428,634 V649 L426,651 H384 L382,649 V634 Z" fill="#7a7a7a"/><rect x="384" y="634" width="42" height="15" fill="url(#greenb)"/><path d="M391.5,637.5 H400 L410,648 H419" stroke="#000" stroke-width="1.6" fill="none"/><path d="M409.5,647.5 L401.5,644 L406.5,639 Z" fill="#000"/><path d="M337,653 H356 L358,655 V670 L356,672 H337 L335,670 V655 Z" fill="#7a7a7a"/><rect x="337" y="655" width="19" height="15" fill="url(#greenb)"/><path d="M339,666 C341,668.5 343,668.5 345,666 C347,663 348,659 350,657 C352,655 354,655 356,657" stroke="#ff0000" stroke-width="1.1" fill="none"/><path d="M339,657.5 L343,661 L339,664.5 Z" fill="#ff0000"/><path d="M344,661.5 H356" stroke="#ff0000" stroke-dasharray="1 1"/><path d="M361,653 H379 L381,655 V670 L379,672 H361 L359,670 V655 Z" fill="#7a7a7a"/><rect x="361" y="655" width="18" height="15" fill="url(#grayb)"/><path d="M361,666 C363,668.5 365,668.5 367,666 C369,663 370,659 372,657 C374,655 376,655 378,657" stroke="#ff0000" stroke-width="1.1" fill="none"/><path d="M361,655.5 H375 M361,663.5 H369 M364.5,656 V663 M363,657 L364.5,656 L366,657 M363,662 L364.5,663 L366,662" stroke="#000" stroke-width="1.1" fill="none"/><rect x="383" y="652" width="36" height="19" fill="#c8c8c8" /><rect x="384" y="653" width="34" height="17" fill="#fafafa" /><text x="384.5" y="666" font-size="11" fill="#909090" text-anchor="start" font-weight="normal" textLength="16" lengthAdjust="spacingAndGlyphs" >0,5</text><text x="420.5" y="666" font-size="11" fill="#909090" text-anchor="start" font-weight="normal" textLength="6.5" lengthAdjust="spacingAndGlyphs" >В</text><text x="443.5" y="601" font-size="11" fill="#800080" text-anchor="start" font-weight="normal" textLength="63" lengthAdjust="spacingAndGlyphs" >T1 = 9,45 мс</text><text x="531.5" y="601" font-size="11" fill="#008000" text-anchor="start" font-weight="normal" textLength="66" lengthAdjust="spacingAndGlyphs" >T2 =10,62 мс</text><text x="619.5" y="601" font-size="11" fill="#008000" text-anchor="start" font-weight="normal" textLength="19" lengthAdjust="spacingAndGlyphs" >T2 -</text><text x="644" y="601" font-size="11" fill="#800080" text-anchor="start" font-weight="normal" textLength="22" lengthAdjust="spacingAndGlyphs" >T1 =</text><text x="671" y="601" font-size="11" fill="#008000" text-anchor="start" font-weight="normal" textLength="36" lengthAdjust="spacingAndGlyphs" >1,17 мс</text><text x="439.5" y="611" font-size="11" fill="#800080" text-anchor="start" font-weight="normal" textLength="7" lengthAdjust="spacingAndGlyphs" >U</text><text x="446.5" y="613" font-size="9" fill="#ff0000" text-anchor="start" font-weight="normal" textLength="6.5" lengthAdjust="spacingAndGlyphs" >A</text><text x="453.5" y="611" font-size="11" fill="#800080" text-anchor="start" font-weight="normal" textLength="48" lengthAdjust="spacingAndGlyphs" >1= 1,17 В</text><text x="439.5" y="621" font-size="11" fill="#800080" text-anchor="start" font-weight="normal" textLength="7" lengthAdjust="spacingAndGlyphs" >U</text><text x="446.5" y="623" font-size="9" fill="#0000ff" text-anchor="start" font-weight="normal" textLength="6.5" lengthAdjust="spacingAndGlyphs" >B</text><text x="453.5" y="621" font-size="11" fill="#800080" text-anchor="start" font-weight="normal" textLength="49.5" lengthAdjust="spacingAndGlyphs" >1=-0,04 В</text><text x="527.5" y="611" font-size="11" fill="#008000" text-anchor="start" font-weight="normal" textLength="7" lengthAdjust="spacingAndGlyphs" >U</text><text x="534.5" y="613" font-size="9" fill="#ff0000" text-anchor="start" font-weight="normal" textLength="6.5" lengthAdjust="spacingAndGlyphs" >A</text><text x="541" y="611" font-size="11" fill="#008000" text-anchor="start" font-weight="normal" textLength="50" lengthAdjust="spacingAndGlyphs" >2=-3,63 В</text><text x="527.5" y="621" font-size="11" fill="#008000" text-anchor="start" font-weight="normal" textLength="7" lengthAdjust="spacingAndGlyphs" >U</text><text x="534.5" y="623" font-size="9" fill="#0000ff" text-anchor="start" font-weight="normal" textLength="6.5" lengthAdjust="spacingAndGlyphs" >B</text><text x="541" y="621" font-size="11" fill="#008000" text-anchor="start" font-weight="normal" textLength="50" lengthAdjust="spacingAndGlyphs" >2=-0,09 В</text><text x="615.5" y="611" font-size="11" fill="#008000" text-anchor="start" font-weight="normal" textLength="7" lengthAdjust="spacingAndGlyphs" >U</text><text x="622.5" y="613" font-size="9" fill="#ff0000" text-anchor="start" font-weight="normal" textLength="6.5" lengthAdjust="spacingAndGlyphs" >A</text><text x="629" y="611" font-size="11" fill="#008000" text-anchor="start" font-weight="normal" textLength="9.5" lengthAdjust="spacingAndGlyphs" >2-</text><text x="639.5" y="611" font-size="11" fill="#800080" text-anchor="start" font-weight="normal" textLength="7" lengthAdjust="spacingAndGlyphs" >U</text><text x="646.5" y="613" font-size="9" fill="#ff0000" text-anchor="start" font-weight="normal" textLength="6.5" lengthAdjust="spacingAndGlyphs" >A</text><text x="653" y="611" font-size="11" fill="#800080" text-anchor="start" font-weight="normal" textLength="49.5" lengthAdjust="spacingAndGlyphs" >1=-4,80 В</text><text x="615.5" y="621" font-size="11" fill="#008000" text-anchor="start" font-weight="normal" textLength="7" lengthAdjust="spacingAndGlyphs" >U</text><text x="622.5" y="623" font-size="9" fill="#0000ff" text-anchor="start" font-weight="normal" textLength="6.5" lengthAdjust="spacingAndGlyphs" >B</text><text x="629" y="621" font-size="11" fill="#008000" text-anchor="start" font-weight="normal" textLength="9.5" lengthAdjust="spacingAndGlyphs" >2-</text><text x="639.5" y="621" font-size="11" fill="#800080" text-anchor="start" font-weight="normal" textLength="7" lengthAdjust="spacingAndGlyphs" >U</text><text x="646.5" y="623" font-size="9" fill="#0000ff" text-anchor="start" font-weight="normal" textLength="6.5" lengthAdjust="spacingAndGlyphs" >B</text><text x="653" y="621" font-size="11" fill="#800080" text-anchor="start" font-weight="normal" textLength="49.5" lengthAdjust="spacingAndGlyphs" >1=-0,05 В</text><text x="441" y="651" font-size="11" fill="#ff0000" text-anchor="start" font-weight="normal" textLength="58" lengthAdjust="spacingAndGlyphs" >U- =-3,19 В</text><text x="440" y="661" font-size="11" fill="#ff0000" text-anchor="start" font-weight="normal" textLength="58" lengthAdjust="spacingAndGlyphs" >U~= 5,90 В</text><text x="443" y="671" font-size="11" fill="#ff0000" text-anchor="start" font-weight="normal" textLength="63" lengthAdjust="spacingAndGlyphs" >F =318,3 Гц</text><text x="524" y="651" font-size="11" fill="#0000ff" text-anchor="start" font-weight="normal" textLength="71" lengthAdjust="spacingAndGlyphs" >U- = -60,99 мВ</text><text x="523.5" y="661" font-size="11" fill="#0000ff" text-anchor="start" font-weight="normal" textLength="67" lengthAdjust="spacingAndGlyphs" >U~=39,00 мВ</text><text x="526" y="671" font-size="11" fill="#0000ff" text-anchor="start" font-weight="normal" textLength="63.5" lengthAdjust="spacingAndGlyphs" >F = 4103 Гц</text><rect x="727" y="593" width="11" height="12" fill="#858585" /><rect x="728" y="594" width="9" height="10" fill="#f8f8f8" /><rect x="727" y="609" width="11" height="12" fill="#858585" /><rect x="728" y="610" width="9" height="10" fill="#f8f8f8" /><text x="742.5" y="602" font-size="11" fill="#ff0000" text-anchor="start" font-weight="normal" textLength="18" lengthAdjust="spacingAndGlyphs" >Вкл</text><text x="742.5" y="618" font-size="11" fill="#0000ff" text-anchor="start" font-weight="normal" textLength="18" lengthAdjust="spacingAndGlyphs" >Вкл</text><rect x="763.5" y="592.5" width="17" height="12" rx="3" fill="url(#btnb)" stroke="#8a8a8a"/><rect x="763.5" y="607.5" width="17" height="13" rx="3" fill="url(#btnb)" stroke="#8a8a8a"/><rect x="767" y="600" width="2" height="2" fill="#ff0000" /><rect x="767" y="616" width="2" height="2" fill="#0000ff" /><rect x="770" y="600" width="2" height="2" fill="#ff0000" /><rect x="770" y="616" width="2" height="2" fill="#0000ff" /><rect x="773" y="600" width="2" height="2" fill="#ff0000" /><rect x="773" y="616" width="2" height="2" fill="#0000ff" /><rect x="613.5" y="644.5" width="83" height="24" rx="3" fill="url(#btnb)" stroke="#8a8a8a"/><rect x="698.5" y="644.5" width="83" height="24" rx="3" fill="url(#btnb)" stroke="#8a8a8a"/><path d="M625.5,648.5 L634,655.5 L625.5,662.5 Z" fill="#38c838" stroke="#207020" stroke-width="0.9"/><text x="641" y="661" font-size="11" fill="#008000" text-anchor="start" font-weight="bold" textLength="47" lengthAdjust="spacingAndGlyphs" >Однокр.</text><path d="M714.5,648.5 L722,655.5 L714.5,662.5 Z M721.5,648.5 L729,655.5 L721.5,662.5 Z" fill="#38c838" stroke="#207020" stroke-width="0.9"/><text x="733" y="661" font-size="11" fill="#008000" text-anchor="start" font-weight="bold" textLength="33" lengthAdjust="spacingAndGlyphs" >Цикл.</text>
</svg></body></html>
